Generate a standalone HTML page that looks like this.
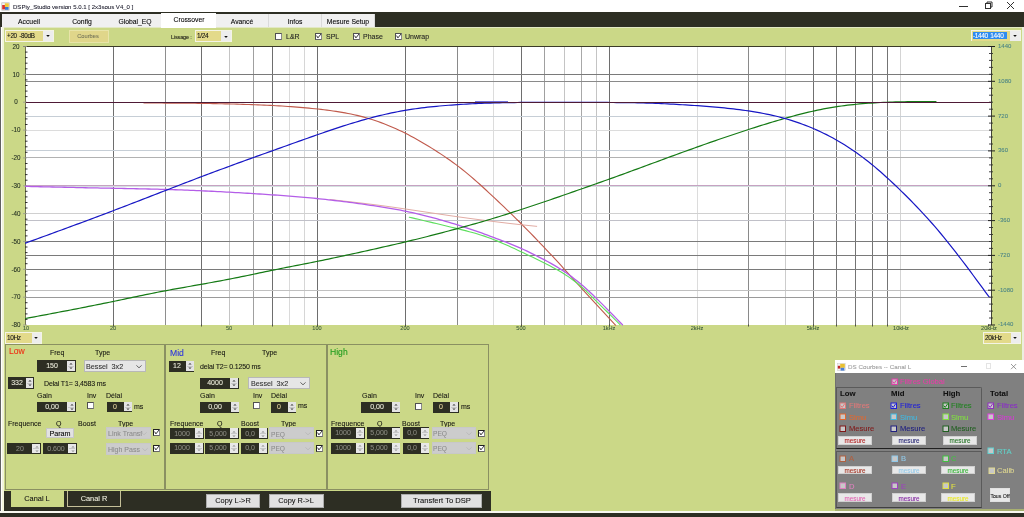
<!DOCTYPE html>
<html><head><meta charset="utf-8"><style>
html,body{margin:0;padding:0;}
body{width:1024px;height:517px;overflow:hidden;position:relative;background:#cbd887;font-family:"Liberation Sans",sans-serif;}
body div{position:absolute;box-sizing:border-box;}
.t{white-space:nowrap;will-change:transform;-webkit-text-stroke:0.08px currentColor;}
svg{position:absolute;left:0;top:0;}
</style></head><body>

<div style="left:0px;top:0px;width:1024px;height:12px;background:#ffffff"></div>
<div style="left:0px;top:11.8px;width:1024px;height:14.9px;background:#2d2e23"></div>
<div style="left:3px;top:26.7px;width:1019px;height:1.3px;background:#e2e8c4"></div>
<div style="left:0px;top:27px;width:1px;height:490px;background:#626262"></div>
<div style="left:1px;top:27px;width:1.4px;height:490px;background:#ffffff"></div>
<div style="left:2.4px;top:27px;width:1.2px;height:490px;background:#f2f4dc"></div>
<div style="left:1022px;top:27px;width:2px;height:333px;background:#eceee0"></div>
<svg width="10" height="10" style="left:1px;top:2px"><rect x="0.8" y="0.8" width="7.4" height="7.4" fill="#f4f4f4" stroke="#b8b8b8" stroke-width="0.7"/><rect x="1.2" y="3" width="3" height="4.4" fill="#d83030"/><rect x="3.8" y="1.3" width="4" height="3.6" fill="#f0c838"/><rect x="4" y="5" width="3.6" height="2.8" fill="#3a7ad0"/></svg>
<div class="t" style="left:12.8px;top:3.80px;font-size:6.05px;line-height:6.96px;color:#202030;">DSPiy_Studio version 5.0.1 [ 2x3sous V4_0 ]</div>
<div style="left:959px;top:5.5px;width:9px;height:1px;background:#303030"></div>
<svg width="20" height="12" style="left:983px;top:0px"><rect x="2.5" y="3.5" width="5" height="5" fill="none" stroke="#303030" stroke-width="1"/><path d="M4 3.5 V2 H9 V7 H7.5" fill="none" stroke="#303030" stroke-width="1"/></svg>
<svg width="14" height="12" style="left:1005px;top:0px"><path d="M2 2 L9 9 M9 2 L2 9" stroke="#303030" stroke-width="1"/></svg>
<div style="left:2px;top:14px;width:53.6px;height:13px;background:#f0f0f0"></div>
<div style="left:54.6px;top:14px;width:1px;height:13px;background:#dadada"></div>
<div class="t" style="left:-71.5px;top:17.58px;width:200px;text-align:center;font-size:6.8px;line-height:7.82px;color:#000000;">Accueil</div>
<div style="left:55px;top:14px;width:53.6px;height:13px;background:#f0f0f0"></div>
<div style="left:107.6px;top:14px;width:1px;height:13px;background:#dadada"></div>
<div class="t" style="left:-18.5px;top:17.58px;width:200px;text-align:center;font-size:6.8px;line-height:7.82px;color:#000000;">Config</div>
<div style="left:108px;top:14px;width:53.6px;height:13px;background:#f0f0f0"></div>
<div style="left:160.6px;top:14px;width:1px;height:13px;background:#dadada"></div>
<div class="t" style="left:34.5px;top:17.58px;width:200px;text-align:center;font-size:6.8px;line-height:7.82px;color:#000000;">Global_EQ</div>
<div style="left:215px;top:14px;width:54.1px;height:13px;background:#f0f0f0"></div>
<div style="left:268.1px;top:14px;width:1px;height:13px;background:#dadada"></div>
<div class="t" style="left:141.75px;top:17.58px;width:200px;text-align:center;font-size:6.8px;line-height:7.82px;color:#000000;">Avancé</div>
<div style="left:268.5px;top:14px;width:53.6px;height:13px;background:#f0f0f0"></div>
<div style="left:321.1px;top:14px;width:1px;height:13px;background:#dadada"></div>
<div class="t" style="left:195.0px;top:17.58px;width:200px;text-align:center;font-size:6.8px;line-height:7.82px;color:#000000;">Infos</div>
<div style="left:321.5px;top:14px;width:53.1px;height:13px;background:#f0f0f0"></div>
<div style="left:373.6px;top:14px;width:1px;height:13px;background:#dadada"></div>
<div class="t" style="left:247.75px;top:17.58px;width:200px;text-align:center;font-size:6.8px;line-height:7.82px;color:#000000;">Mesure Setup</div>
<div style="left:161px;top:13px;width:55px;height:14.5px;background:#ffffff"></div>
<div class="t" style="left:88.5px;top:15.97px;width:200px;text-align:center;font-size:6.8px;line-height:7.82px;color:#000000;">Crossover</div>
<div style="left:5px;top:30px;width:49px;height:12px;background:#f4f4e6"></div>
<div style="left:5.8px;top:30.8px;width:37.4px;height:10.4px;background:#e3da8a"></div>
<div style="left:43.2px;top:30.8px;width:10px;height:10.4px;background:#ededed"></div>
<svg width="8" height="6" style="left:44.20px;top:33.40px"><path d="M2.2 2 H5.8 L4 3.9 Z" fill="#101010"/></svg>
<div class="t" style="left:7.2px;top:32.36px;font-size:6.3px;line-height:7.24px;color:#101010;letter-spacing:-0.3px;word-spacing:1px">+20 -80dB</div>
<div style="left:69px;top:30px;width:40px;height:13px;background:#e0d68a;border:1px solid #e8e4a8"></div>
<div class="t" style="left:-11.700000000000003px;top:32.89px;width:200px;text-align:center;font-size:5.7px;line-height:6.55px;color:#76765a;">Courbes</div>
<div class="t" style="left:170.7px;top:33.75px;font-size:5.6px;line-height:6.44px;color:#202018;letter-spacing:-0.2px">Lissage :</div>
<div style="left:195px;top:30.3px;width:36.599999999999994px;height:11.7px;background:#f4f4e6"></div>
<div style="left:195.8px;top:31.1px;width:25.499999999999993px;height:10.1px;background:#e3da8a"></div>
<div style="left:221.29999999999998px;top:31.1px;width:9.5px;height:10.1px;background:#ededed"></div>
<svg width="8" height="6" style="left:222.05px;top:33.55px"><path d="M2.2 2 H5.8 L4 3.9 Z" fill="#101010"/></svg>
<div class="t" style="left:197.2px;top:32.39px;font-size:6.5px;line-height:7.47px;color:#101010;letter-spacing:-0.35px;word-spacing:1px">1/24</div>
<div style="left:275px;top:33.3px;width:7px;height:7px;background:#ffffff;border:1px solid #505050;border-right-color:#8a8a8a;border-bottom-color:#666"></div>
<div class="t" style="left:285.5px;top:32.86px;font-size:7.0px;line-height:8.05px;color:#222222;">L&amp;R</div>
<div style="left:315.2px;top:33.3px;width:7px;height:7px;background:#ffffff;border:1px solid #505050;border-right-color:#8a8a8a;border-bottom-color:#666"></div>
<svg width="7" height="7" style="left:315.2px;top:33.3px"><path d="M1.6 2.6 L2.9 4.9 L6.0 1.0" fill="none" stroke="#383838" stroke-width="1"/></svg>
<div class="t" style="left:325.5px;top:32.86px;font-size:7.0px;line-height:8.05px;color:#222222;">SPL</div>
<div style="left:353px;top:33.3px;width:7px;height:7px;background:#ffffff;border:1px solid #505050;border-right-color:#8a8a8a;border-bottom-color:#666"></div>
<svg width="7" height="7" style="left:353px;top:33.3px"><path d="M1.6 2.6 L2.9 4.9 L6.0 1.0" fill="none" stroke="#383838" stroke-width="1"/></svg>
<div class="t" style="left:363px;top:32.86px;font-size:7.0px;line-height:8.05px;color:#222222;">Phase</div>
<div style="left:394.6px;top:33.3px;width:7px;height:7px;background:#ffffff;border:1px solid #505050;border-right-color:#8a8a8a;border-bottom-color:#666"></div>
<svg width="7" height="7" style="left:394.6px;top:33.3px"><path d="M1.6 2.6 L2.9 4.9 L6.0 1.0" fill="none" stroke="#383838" stroke-width="1"/></svg>
<div class="t" style="left:404.5px;top:32.86px;font-size:7.0px;line-height:8.05px;color:#222222;">Unwrap</div>
<div style="left:971px;top:30.3px;width:50px;height:11.2px;background:#f4f4e6"></div>
<div style="left:971.8px;top:31.1px;width:38.4px;height:9.6px;background:#e3da8a"></div>
<div style="left:1010.2px;top:31.1px;width:10px;height:9.6px;background:#ededed"></div>
<svg width="8" height="6" style="left:1011.20px;top:33.30px"><path d="M2.2 2 H5.8 L4 3.9 Z" fill="#101010"/></svg>
<div style="left:972.8px;top:31.6px;width:34.5px;height:7.6px;background:#2f8cf0"></div>
<div class="t" style="left:973.2px;top:32.14px;font-size:6.5px;line-height:7.47px;color:#ffffff;letter-spacing:-0.35px;word-spacing:1px">-1440 1440</div>
<svg width="1024" height="517" style="left:0;top:0">
<rect x="26" y="47" width="965" height="278" fill="#ffffff"/>
<line x1="113.5" y1="47" x2="113.5" y2="325" stroke="#6e6e6e" stroke-width="1"/>
<line x1="165.5" y1="47" x2="165.5" y2="325" stroke="#8e8e8e" stroke-width="1"/>
<line x1="201.5" y1="47" x2="201.5" y2="325" stroke="#6e6e6e" stroke-width="1"/>
<line x1="229.5" y1="47" x2="229.5" y2="325" stroke="#c4c4c4" stroke-width="1"/>
<line x1="253.5" y1="47" x2="253.5" y2="325" stroke="#a0a0a0" stroke-width="1"/>
<line x1="272.5" y1="47" x2="272.5" y2="325" stroke="#6e6e6e" stroke-width="1"/>
<line x1="289.5" y1="47" x2="289.5" y2="325" stroke="#dadada" stroke-width="1"/>
<line x1="304.5" y1="47" x2="304.5" y2="325" stroke="#d6d6d6" stroke-width="1"/>
<line x1="317.5" y1="47" x2="317.5" y2="325" stroke="#6e6e6e" stroke-width="1"/>
<line x1="405.5" y1="47" x2="405.5" y2="325" stroke="#6e6e6e" stroke-width="1"/>
<line x1="457.5" y1="47" x2="457.5" y2="325" stroke="#8a8a8a" stroke-width="1"/>
<line x1="493.5" y1="47" x2="493.5" y2="325" stroke="#dcdcdc" stroke-width="1"/>
<line x1="521.5" y1="47" x2="521.5" y2="325" stroke="#6e6e6e" stroke-width="1"/>
<line x1="544.5" y1="47" x2="544.5" y2="325" stroke="#a0a0a0" stroke-width="1"/>
<line x1="564.5" y1="47" x2="564.5" y2="325" stroke="#c4c4c4" stroke-width="1"/>
<line x1="581.5" y1="47" x2="581.5" y2="325" stroke="#a8a8a8" stroke-width="1"/>
<line x1="596.5" y1="47" x2="596.5" y2="325" stroke="#c4c4c4" stroke-width="1"/>
<line x1="609.5" y1="47" x2="609.5" y2="325" stroke="#6e6e6e" stroke-width="1"/>
<line x1="697.5" y1="47" x2="697.5" y2="325" stroke="#dcdcdc" stroke-width="1"/>
<line x1="748.5" y1="47" x2="748.5" y2="325" stroke="#8a8a8a" stroke-width="1"/>
<line x1="785.5" y1="47" x2="785.5" y2="325" stroke="#cccccc" stroke-width="1"/>
<line x1="813.5" y1="47" x2="813.5" y2="325" stroke="#707070" stroke-width="1"/>
<line x1="836.5" y1="47" x2="836.5" y2="325" stroke="#747474" stroke-width="1"/>
<line x1="855.5" y1="47" x2="855.5" y2="325" stroke="#747474" stroke-width="1"/>
<line x1="872.5" y1="47" x2="872.5" y2="325" stroke="#747474" stroke-width="1"/>
<line x1="887.5" y1="47" x2="887.5" y2="325" stroke="#747474" stroke-width="1"/>
<line x1="900.5" y1="47" x2="900.5" y2="325" stroke="#d4d4d4" stroke-width="1"/>
<line x1="26" y1="74.5" x2="991" y2="74.5" stroke="#7a7a7a" stroke-width="1"/>
<line x1="26" y1="81.5" x2="991" y2="81.5" stroke="#8a8a8a" stroke-width="1"/>
<line x1="26" y1="116.5" x2="991" y2="116.5" stroke="#c6ced6" stroke-width="1"/>
<line x1="26" y1="130.5" x2="991" y2="130.5" stroke="#dcdcdc" stroke-width="1"/>
<line x1="26" y1="150.5" x2="991" y2="150.5" stroke="#c6ced6" stroke-width="1"/>
<line x1="26" y1="157.5" x2="991" y2="157.5" stroke="#b2b2b2" stroke-width="1"/>
<line x1="26" y1="213.5" x2="991" y2="213.5" stroke="#d0d0d0" stroke-width="1"/>
<line x1="26" y1="220.5" x2="991" y2="220.5" stroke="#c0c0c8" stroke-width="1"/>
<line x1="26" y1="241.5" x2="991" y2="241.5" stroke="#7a7a7a" stroke-width="1"/>
<line x1="26" y1="255.5" x2="991" y2="255.5" stroke="#7a7a7a" stroke-width="1"/>
<line x1="26" y1="269.5" x2="991" y2="269.5" stroke="#7a7a7a" stroke-width="1"/>
<line x1="26" y1="290.5" x2="991" y2="290.5" stroke="#c0c0c0" stroke-width="1"/>
<line x1="26" y1="297.5" x2="991" y2="297.5" stroke="#9a9a9a" stroke-width="1"/>
<line x1="26" y1="186.5" x2="991" y2="186.5" stroke="#d4e0e0" stroke-width="1"/>
<line x1="26" y1="185.5" x2="991" y2="185.5" stroke="#c6a2c2" stroke-width="1"/>
<line x1="23" y1="46.5" x2="995" y2="46.5" stroke="#3a3a28" stroke-width="1"/>
<line x1="25.5" y1="46" x2="25.5" y2="325" stroke="#5a5a48" stroke-width="0.8"/>
<line x1="991.5" y1="46" x2="991.5" y2="325" stroke="#282828" stroke-width="0.85"/>
<line x1="23" y1="46.5" x2="27" y2="46.5" stroke="#9a9a90" stroke-width="0.8"/>
<line x1="25" y1="52.1" x2="27.5" y2="52.1" stroke="#202020" stroke-width="0.9"/>
<line x1="25" y1="57.6" x2="27.5" y2="57.6" stroke="#202020" stroke-width="0.9"/>
<line x1="25" y1="63.2" x2="27.5" y2="63.2" stroke="#202020" stroke-width="0.9"/>
<line x1="25" y1="68.8" x2="27.5" y2="68.8" stroke="#202020" stroke-width="0.9"/>
<line x1="23" y1="74.3" x2="27" y2="74.3" stroke="#9a9a90" stroke-width="0.8"/>
<line x1="25" y1="79.9" x2="27.5" y2="79.9" stroke="#202020" stroke-width="0.9"/>
<line x1="25" y1="85.5" x2="27.5" y2="85.5" stroke="#202020" stroke-width="0.9"/>
<line x1="25" y1="91.1" x2="27.5" y2="91.1" stroke="#202020" stroke-width="0.9"/>
<line x1="25" y1="96.6" x2="27.5" y2="96.6" stroke="#202020" stroke-width="0.9"/>
<line x1="23" y1="102.2" x2="27" y2="102.2" stroke="#9a9a90" stroke-width="0.8"/>
<line x1="25" y1="107.8" x2="27.5" y2="107.8" stroke="#202020" stroke-width="0.9"/>
<line x1="25" y1="113.3" x2="27.5" y2="113.3" stroke="#202020" stroke-width="0.9"/>
<line x1="25" y1="118.9" x2="27.5" y2="118.9" stroke="#202020" stroke-width="0.9"/>
<line x1="25" y1="124.5" x2="27.5" y2="124.5" stroke="#202020" stroke-width="0.9"/>
<line x1="23" y1="130.1" x2="27" y2="130.1" stroke="#9a9a90" stroke-width="0.8"/>
<line x1="25" y1="135.6" x2="27.5" y2="135.6" stroke="#202020" stroke-width="0.9"/>
<line x1="25" y1="141.2" x2="27.5" y2="141.2" stroke="#202020" stroke-width="0.9"/>
<line x1="25" y1="146.8" x2="27.5" y2="146.8" stroke="#202020" stroke-width="0.9"/>
<line x1="25" y1="152.3" x2="27.5" y2="152.3" stroke="#202020" stroke-width="0.9"/>
<line x1="23" y1="157.9" x2="27" y2="157.9" stroke="#9a9a90" stroke-width="0.8"/>
<line x1="25" y1="163.5" x2="27.5" y2="163.5" stroke="#202020" stroke-width="0.9"/>
<line x1="25" y1="169.0" x2="27.5" y2="169.0" stroke="#202020" stroke-width="0.9"/>
<line x1="25" y1="174.6" x2="27.5" y2="174.6" stroke="#202020" stroke-width="0.9"/>
<line x1="25" y1="180.2" x2="27.5" y2="180.2" stroke="#202020" stroke-width="0.9"/>
<line x1="23" y1="185.8" x2="27" y2="185.8" stroke="#9a9a90" stroke-width="0.8"/>
<line x1="25" y1="191.3" x2="27.5" y2="191.3" stroke="#202020" stroke-width="0.9"/>
<line x1="25" y1="196.9" x2="27.5" y2="196.9" stroke="#202020" stroke-width="0.9"/>
<line x1="25" y1="202.5" x2="27.5" y2="202.5" stroke="#202020" stroke-width="0.9"/>
<line x1="25" y1="208.0" x2="27.5" y2="208.0" stroke="#202020" stroke-width="0.9"/>
<line x1="23" y1="213.6" x2="27" y2="213.6" stroke="#9a9a90" stroke-width="0.8"/>
<line x1="25" y1="219.2" x2="27.5" y2="219.2" stroke="#202020" stroke-width="0.9"/>
<line x1="25" y1="224.7" x2="27.5" y2="224.7" stroke="#202020" stroke-width="0.9"/>
<line x1="25" y1="230.3" x2="27.5" y2="230.3" stroke="#202020" stroke-width="0.9"/>
<line x1="25" y1="235.9" x2="27.5" y2="235.9" stroke="#202020" stroke-width="0.9"/>
<line x1="23" y1="241.4" x2="27" y2="241.4" stroke="#9a9a90" stroke-width="0.8"/>
<line x1="25" y1="247.0" x2="27.5" y2="247.0" stroke="#202020" stroke-width="0.9"/>
<line x1="25" y1="252.6" x2="27.5" y2="252.6" stroke="#202020" stroke-width="0.9"/>
<line x1="25" y1="258.2" x2="27.5" y2="258.2" stroke="#202020" stroke-width="0.9"/>
<line x1="25" y1="263.7" x2="27.5" y2="263.7" stroke="#202020" stroke-width="0.9"/>
<line x1="23" y1="269.3" x2="27" y2="269.3" stroke="#9a9a90" stroke-width="0.8"/>
<line x1="25" y1="274.9" x2="27.5" y2="274.9" stroke="#202020" stroke-width="0.9"/>
<line x1="25" y1="280.4" x2="27.5" y2="280.4" stroke="#202020" stroke-width="0.9"/>
<line x1="25" y1="286.0" x2="27.5" y2="286.0" stroke="#202020" stroke-width="0.9"/>
<line x1="25" y1="291.6" x2="27.5" y2="291.6" stroke="#202020" stroke-width="0.9"/>
<line x1="23" y1="297.2" x2="27" y2="297.2" stroke="#9a9a90" stroke-width="0.8"/>
<line x1="25" y1="302.7" x2="27.5" y2="302.7" stroke="#202020" stroke-width="0.9"/>
<line x1="25" y1="308.3" x2="27.5" y2="308.3" stroke="#202020" stroke-width="0.9"/>
<line x1="25" y1="313.9" x2="27.5" y2="313.9" stroke="#202020" stroke-width="0.9"/>
<line x1="25" y1="319.4" x2="27.5" y2="319.4" stroke="#202020" stroke-width="0.9"/>
<line x1="23" y1="325.0" x2="27" y2="325.0" stroke="#9a9a90" stroke-width="0.8"/>
<line x1="988" y1="46.5" x2="995" y2="46.5" stroke="#202020" stroke-width="1"/>
<line x1="989" y1="53.5" x2="993" y2="53.5" stroke="#303030" stroke-width="0.9"/>
<line x1="989" y1="60.4" x2="993" y2="60.4" stroke="#303030" stroke-width="0.9"/>
<line x1="989" y1="67.4" x2="993" y2="67.4" stroke="#303030" stroke-width="0.9"/>
<line x1="989" y1="74.3" x2="993" y2="74.3" stroke="#303030" stroke-width="0.9"/>
<line x1="988" y1="81.3" x2="995" y2="81.3" stroke="#202020" stroke-width="1"/>
<line x1="989" y1="88.3" x2="993" y2="88.3" stroke="#303030" stroke-width="0.9"/>
<line x1="989" y1="95.2" x2="993" y2="95.2" stroke="#303030" stroke-width="0.9"/>
<line x1="989" y1="102.2" x2="993" y2="102.2" stroke="#303030" stroke-width="0.9"/>
<line x1="989" y1="109.2" x2="993" y2="109.2" stroke="#303030" stroke-width="0.9"/>
<line x1="988" y1="116.1" x2="995" y2="116.1" stroke="#202020" stroke-width="1"/>
<line x1="989" y1="123.1" x2="993" y2="123.1" stroke="#303030" stroke-width="0.9"/>
<line x1="989" y1="130.1" x2="993" y2="130.1" stroke="#303030" stroke-width="0.9"/>
<line x1="989" y1="137.0" x2="993" y2="137.0" stroke="#303030" stroke-width="0.9"/>
<line x1="989" y1="144.0" x2="993" y2="144.0" stroke="#303030" stroke-width="0.9"/>
<line x1="988" y1="150.9" x2="995" y2="150.9" stroke="#202020" stroke-width="1"/>
<line x1="989" y1="157.9" x2="993" y2="157.9" stroke="#303030" stroke-width="0.9"/>
<line x1="989" y1="164.9" x2="993" y2="164.9" stroke="#303030" stroke-width="0.9"/>
<line x1="989" y1="171.8" x2="993" y2="171.8" stroke="#303030" stroke-width="0.9"/>
<line x1="989" y1="178.8" x2="993" y2="178.8" stroke="#303030" stroke-width="0.9"/>
<line x1="988" y1="185.8" x2="995" y2="185.8" stroke="#202020" stroke-width="1"/>
<line x1="989" y1="192.7" x2="993" y2="192.7" stroke="#303030" stroke-width="0.9"/>
<line x1="989" y1="199.7" x2="993" y2="199.7" stroke="#303030" stroke-width="0.9"/>
<line x1="989" y1="206.6" x2="993" y2="206.6" stroke="#303030" stroke-width="0.9"/>
<line x1="989" y1="213.6" x2="993" y2="213.6" stroke="#303030" stroke-width="0.9"/>
<line x1="988" y1="220.6" x2="995" y2="220.6" stroke="#202020" stroke-width="1"/>
<line x1="989" y1="227.5" x2="993" y2="227.5" stroke="#303030" stroke-width="0.9"/>
<line x1="989" y1="234.5" x2="993" y2="234.5" stroke="#303030" stroke-width="0.9"/>
<line x1="989" y1="241.5" x2="993" y2="241.5" stroke="#303030" stroke-width="0.9"/>
<line x1="989" y1="248.4" x2="993" y2="248.4" stroke="#303030" stroke-width="0.9"/>
<line x1="988" y1="255.4" x2="995" y2="255.4" stroke="#202020" stroke-width="1"/>
<line x1="989" y1="262.3" x2="993" y2="262.3" stroke="#303030" stroke-width="0.9"/>
<line x1="989" y1="269.3" x2="993" y2="269.3" stroke="#303030" stroke-width="0.9"/>
<line x1="989" y1="276.3" x2="993" y2="276.3" stroke="#303030" stroke-width="0.9"/>
<line x1="989" y1="283.2" x2="993" y2="283.2" stroke="#303030" stroke-width="0.9"/>
<line x1="988" y1="290.2" x2="995" y2="290.2" stroke="#202020" stroke-width="1"/>
<line x1="989" y1="297.1" x2="993" y2="297.1" stroke="#303030" stroke-width="0.9"/>
<line x1="989" y1="304.1" x2="993" y2="304.1" stroke="#303030" stroke-width="0.9"/>
<line x1="989" y1="311.1" x2="993" y2="311.1" stroke="#303030" stroke-width="0.9"/>
<line x1="989" y1="318.0" x2="993" y2="318.0" stroke="#303030" stroke-width="0.9"/>
<line x1="988" y1="325.0" x2="995" y2="325.0" stroke="#202020" stroke-width="1"/>
<line x1="113.5" y1="324.5" x2="113.5" y2="326.5" stroke="#404040" stroke-width="0.9"/>
<line x1="317.5" y1="324.5" x2="317.5" y2="326.5" stroke="#404040" stroke-width="0.9"/>
<line x1="405.5" y1="324.5" x2="405.5" y2="326.5" stroke="#404040" stroke-width="0.9"/>
<line x1="521.5" y1="324.5" x2="521.5" y2="326.5" stroke="#404040" stroke-width="0.9"/>
<line x1="609.5" y1="324.5" x2="609.5" y2="326.5" stroke="#404040" stroke-width="0.9"/>
<line x1="813.5" y1="324.5" x2="813.5" y2="326.5" stroke="#404040" stroke-width="0.9"/>
<line x1="988.5" y1="324.5" x2="988.5" y2="326.5" stroke="#404040" stroke-width="0.9"/>
<line x1="201.5" y1="324.5" x2="201.5" y2="326.5" stroke="#404040" stroke-width="0.9"/>
<line x1="272.5" y1="324.5" x2="272.5" y2="326.5" stroke="#404040" stroke-width="0.9"/>
<line x1="748.5" y1="324.5" x2="748.5" y2="326.5" stroke="#404040" stroke-width="0.9"/>
<line x1="836.5" y1="324.5" x2="836.5" y2="326.5" stroke="#404040" stroke-width="0.9"/>
<line x1="855.5" y1="324.5" x2="855.5" y2="326.5" stroke="#404040" stroke-width="0.9"/>
<line x1="872.5" y1="324.5" x2="872.5" y2="326.5" stroke="#404040" stroke-width="0.9"/>
<line x1="887.5" y1="324.5" x2="887.5" y2="326.5" stroke="#404040" stroke-width="0.9"/>
<path d="M144.0 102.98 L147.0 102.99 L150.0 103.01 L153.0 103.02 L156.0 103.03 L159.0 103.05 L162.0 103.06 L165.0 103.08 L168.0 103.09 L171.0 103.11 L174.0 103.13 L177.0 103.15 L180.0 103.17 L183.0 103.20 L186.0 103.23 L189.0 103.25 L192.0 103.29 L195.0 103.32 L198.0 103.36 L201.0 103.40 L204.0 103.44 L207.0 103.49 L210.0 103.54 L213.0 103.59 L216.0 103.65 L219.0 103.71 L222.0 103.77 L225.0 103.84 L228.0 103.91 L231.0 103.98 L234.0 104.06 L237.0 104.15 L240.0 104.24 L243.0 104.33 L246.0 104.43 L249.0 104.53 L252.0 104.64 L255.0 104.75 L258.0 104.87 L261.0 104.99 L264.0 105.12 L267.0 105.26 L270.0 105.41 L273.0 105.56 L276.0 105.72 L279.0 105.89 L282.0 106.07 L285.0 106.25 L288.0 106.45 L291.0 106.66 L294.0 106.88 L297.0 107.11 L300.0 107.35 L303.0 107.60 L306.0 107.87 L309.0 108.15 L312.0 108.44 L315.0 108.74 L318.0 109.06 L321.0 109.40 L324.0 109.75 L327.0 110.12 L330.0 110.51 L333.0 110.93 L336.0 111.37 L339.0 111.84 L342.0 112.34 L345.0 112.87 L348.0 113.44 L351.0 114.05 L354.0 114.70 L357.0 115.39 L360.0 116.12 L363.0 116.90 L366.0 117.72 L369.0 118.60 L372.0 119.53 L375.0 120.51 L378.0 121.53 L381.0 122.61 L384.0 123.74 L387.0 124.92 L390.0 126.15 L393.0 127.43 L396.0 128.77 L399.0 130.15 L402.0 131.58 L405.0 133.07 L408.0 134.60 L411.0 136.17 L414.0 137.80 L417.0 139.46 L420.0 141.16 L423.0 142.91 L426.0 144.69 L429.0 146.50 L432.0 148.36 L435.0 150.25 L438.0 152.18 L441.0 154.14 L444.0 156.14 L447.0 158.19 L450.0 160.29 L453.0 162.43 L456.0 164.64 L459.0 166.91 L462.0 169.25 L465.0 171.65 L468.0 174.11 L471.0 176.63 L474.0 179.21 L477.0 181.84 L480.0 184.52 L483.0 187.24 L486.0 190.00 L489.0 192.79 L492.0 195.60 L495.0 198.42 L498.0 201.25 L501.0 204.10 L504.0 206.95 L507.0 209.82 L510.0 212.70 L513.0 215.60 L516.0 218.54 L519.0 221.50 L522.0 224.50 L525.0 227.52 L528.0 230.58 L531.0 233.65 L534.0 236.75 L537.0 239.87 L540.0 243.01 L543.0 246.17 L546.0 249.34 L549.0 252.53 L552.0 255.73 L555.0 258.96 L558.0 262.21 L561.0 265.48 L564.0 268.76 L567.0 272.07 L570.0 275.39 L573.0 278.73 L576.0 282.06 L579.0 285.40 L582.0 288.74 L585.0 292.07 L588.0 295.38 L591.0 298.68 L594.0 301.97 L597.0 305.23 L600.0 308.48 L603.0 311.71 L606.0 314.93 L609.0 318.13 L612.0 321.33 L615.0 324.53 L615.6 325.17" fill="none" stroke="#c05a4c" stroke-width="1.1" opacity="1" stroke-linejoin="round" stroke-linecap="round"/>
<path d="M330.0 199.55 L333.0 199.88 L336.0 200.21 L339.0 200.54 L342.0 200.87 L345.0 201.21 L348.0 201.54 L351.0 201.88 L354.0 202.23 L357.0 202.57 L360.0 202.93 L363.0 203.28 L366.0 203.64 L369.0 204.01 L372.0 204.39 L375.0 204.77 L378.0 205.15 L381.0 205.55 L384.0 205.95 L387.0 206.36 L390.0 206.78 L393.0 207.20 L396.0 207.63 L399.0 208.06 L402.0 208.50 L405.0 208.94 L408.0 209.39 L411.0 209.83 L414.0 210.28 L417.0 210.73 L420.0 211.19 L423.0 211.64 L426.0 212.09 L429.0 212.54 L432.0 213.00 L435.0 213.45 L438.0 213.89 L441.0 214.34 L444.0 214.78 L447.0 215.22 L450.0 215.66 L453.0 216.09 L456.0 216.52 L459.0 216.94 L462.0 217.36 L465.0 217.78 L468.0 218.19 L471.0 218.59 L474.0 218.99 L477.0 219.39 L480.0 219.78 L483.0 220.17 L486.0 220.55 L489.0 220.93 L492.0 221.31 L495.0 221.69 L498.0 222.06 L501.0 222.42 L504.0 222.78 L507.0 223.14 L510.0 223.49 L513.0 223.83 L516.0 224.17 L519.0 224.50 L522.0 224.83 L525.0 225.14 L528.0 225.46 L531.0 225.76 L534.0 226.07 L536.7 226.35" fill="none" stroke="#e2aca4" stroke-width="1.0" opacity="1" stroke-linejoin="round" stroke-linecap="round"/>
<path d="M409.3 217.20 L412.3 217.90 L415.3 218.61 L418.3 219.32 L421.3 220.02 L424.3 220.73 L427.3 221.44 L430.3 222.15 L433.3 222.86 L436.3 223.57 L439.3 224.29 L442.3 225.01 L445.3 225.73 L448.3 226.45 L451.3 227.17 L454.3 227.90 L457.3 228.63 L460.3 229.37 L463.3 230.12 L466.3 230.89 L469.3 231.68 L472.3 232.49 L475.3 233.34 L478.3 234.23 L481.3 235.16 L484.3 236.13 L487.3 237.17 L490.3 238.26 L493.3 239.41 L496.3 240.62 L499.3 241.87 L502.3 243.17 L505.3 244.50 L508.3 245.85 L511.3 247.22 L514.3 248.60 L517.3 250.00 L520.3 251.40 L523.3 252.81 L526.3 254.23 L529.3 255.67 L532.3 257.11 L535.3 258.57 L538.3 260.04 L541.3 261.52 L544.3 263.03 L547.3 264.55 L550.3 266.10 L553.3 267.69 L556.3 269.33 L559.3 271.04 L562.3 272.82 L565.3 274.69 L568.3 276.66 L571.3 278.74 L574.3 280.95 L577.3 283.29 L580.3 285.78 L583.3 288.42 L586.3 291.22 L589.3 294.12 L592.3 297.09 L595.3 300.10 L598.3 303.10 L601.3 306.08 L604.3 309.05 L607.3 312.01 L610.3 314.98 L613.3 317.94 L616.3 320.92 L619.3 323.89 L620.2 324.78" fill="none" stroke="#5ede5e" stroke-width="1.1" opacity="1" stroke-linejoin="round" stroke-linecap="round"/>
<path d="M25.5 186.40 L28.5 186.47 L31.5 186.54 L34.5 186.60 L37.5 186.67 L40.5 186.74 L43.5 186.81 L46.5 186.87 L49.5 186.94 L52.5 187.01 L55.5 187.08 L58.5 187.14 L61.5 187.21 L64.5 187.27 L67.5 187.34 L70.5 187.41 L73.5 187.47 L76.5 187.53 L79.5 187.60 L82.5 187.66 L85.5 187.73 L88.5 187.79 L91.5 187.85 L94.5 187.91 L97.5 187.97 L100.5 188.03 L103.5 188.09 L106.5 188.15 L109.5 188.21 L112.5 188.27 L115.5 188.33 L118.5 188.38 L121.5 188.44 L124.5 188.50 L127.5 188.55 L130.5 188.61 L133.5 188.67 L136.5 188.73 L139.5 188.79 L142.5 188.85 L145.5 188.92 L148.5 188.98 L151.5 189.06 L154.5 189.13 L157.5 189.21 L160.5 189.29 L163.5 189.37 L166.5 189.46 L169.5 189.55 L172.5 189.65 L175.5 189.75 L178.5 189.86 L181.5 189.97 L184.5 190.08 L187.5 190.20 L190.5 190.32 L193.5 190.44 L196.5 190.57 L199.5 190.70 L202.5 190.84 L205.5 190.98 L208.5 191.12 L211.5 191.27 L214.5 191.41 L217.5 191.56 L220.5 191.72 L223.5 191.88 L226.5 192.04 L229.5 192.20 L232.5 192.37 L235.5 192.53 L238.5 192.71 L241.5 192.88 L244.5 193.06 L247.5 193.24 L250.5 193.42 L253.5 193.60 L256.5 193.79 L259.5 193.98 L262.5 194.17 L265.5 194.37 L268.5 194.57 L271.5 194.78 L274.5 194.99 L277.5 195.20 L280.5 195.42 L283.5 195.64 L286.5 195.87 L289.5 196.11 L292.5 196.35 L295.5 196.60 L298.5 196.85 L301.5 197.11 L304.5 197.38 L307.5 197.65 L310.5 197.93 L313.5 198.22 L316.5 198.52 L319.5 198.83 L322.5 199.14 L325.5 199.46 L328.5 199.79 L331.5 200.13 L334.5 200.48 L337.5 200.84 L340.5 201.20 L343.5 201.57 L346.5 201.95 L349.5 202.34 L352.5 202.73 L355.5 203.14 L358.5 203.55 L361.5 203.97 L364.5 204.39 L367.5 204.83 L370.5 205.27 L373.5 205.72 L376.5 206.18 L379.5 206.64 L382.5 207.12 L385.5 207.60 L388.5 208.09 L391.5 208.60 L394.5 209.12 L397.5 209.66 L400.5 210.22 L403.5 210.80 L406.5 211.41 L409.5 212.04 L412.5 212.70 L415.5 213.37 L418.5 214.07 L421.5 214.80 L424.5 215.54 L427.5 216.30 L430.5 217.09 L433.5 217.89 L436.5 218.71 L439.5 219.55 L442.5 220.40 L445.5 221.27 L448.5 222.16 L451.5 223.06 L454.5 223.97 L457.5 224.90 L460.5 225.84 L463.5 226.79 L466.5 227.77 L469.5 228.76 L472.5 229.78 L475.5 230.82 L478.5 231.89 L481.5 232.98 L484.5 234.08 L487.5 235.18 L490.5 236.29 L493.5 237.40 L496.5 238.52 L499.5 239.64 L502.5 240.78 L505.5 241.94 L508.5 243.12 L511.5 244.33 L514.5 245.57 L517.5 246.85 L520.5 248.17 L523.5 249.52 L526.5 250.91 L529.5 252.34 L532.5 253.80 L535.5 255.29 L538.5 256.82 L541.5 258.37 L544.5 259.95 L547.5 261.55 L550.5 263.19 L553.5 264.88 L556.5 266.62 L559.5 268.44 L562.5 270.34 L565.5 272.33 L568.5 274.42 L571.5 276.61 L574.5 278.90 L577.5 281.29 L580.5 283.77 L583.5 286.35 L586.5 289.02 L589.5 291.77 L592.5 294.59 L595.5 297.47 L598.5 300.41 L601.5 303.39 L604.5 306.40 L607.5 309.44 L610.5 312.49 L613.5 315.55 L616.5 318.61 L619.5 321.68 L622.5 324.75" fill="none" stroke="#b45ee8" stroke-width="1.3" opacity="1" stroke-linejoin="round" stroke-linecap="round"/>
<path d="M25.5 318.51 L28.5 317.95 L31.5 317.39 L34.5 316.82 L37.5 316.26 L40.5 315.69 L43.5 315.12 L46.5 314.56 L49.5 313.99 L52.5 313.42 L55.5 312.85 L58.5 312.28 L61.5 311.70 L64.5 311.13 L67.5 310.55 L70.5 309.97 L73.5 309.39 L76.5 308.81 L79.5 308.22 L82.5 307.64 L85.5 307.05 L88.5 306.45 L91.5 305.86 L94.5 305.26 L97.5 304.66 L100.5 304.05 L103.5 303.45 L106.5 302.84 L109.5 302.22 L112.5 301.60 L115.5 300.98 L118.5 300.35 L121.5 299.72 L124.5 299.09 L127.5 298.46 L130.5 297.83 L133.5 297.20 L136.5 296.57 L139.5 295.94 L142.5 295.32 L145.5 294.70 L148.5 294.09 L151.5 293.48 L154.5 292.87 L157.5 292.28 L160.5 291.69 L163.5 291.11 L166.5 290.54 L169.5 289.98 L172.5 289.43 L175.5 288.89 L178.5 288.35 L181.5 287.82 L184.5 287.29 L187.5 286.76 L190.5 286.24 L193.5 285.71 L196.5 285.18 L199.5 284.65 L202.5 284.12 L205.5 283.58 L208.5 283.03 L211.5 282.48 L214.5 281.93 L217.5 281.37 L220.5 280.81 L223.5 280.24 L226.5 279.66 L229.5 279.08 L232.5 278.50 L235.5 277.90 L238.5 277.31 L241.5 276.70 L244.5 276.09 L247.5 275.47 L250.5 274.85 L253.5 274.22 L256.5 273.59 L259.5 272.96 L262.5 272.32 L265.5 271.69 L268.5 271.06 L271.5 270.44 L274.5 269.83 L277.5 269.22 L280.5 268.62 L283.5 268.03 L286.5 267.44 L289.5 266.86 L292.5 266.27 L295.5 265.69 L298.5 265.11 L301.5 264.52 L304.5 263.93 L307.5 263.34 L310.5 262.74 L313.5 262.14 L316.5 261.53 L319.5 260.92 L322.5 260.30 L325.5 259.68 L328.5 259.05 L331.5 258.42 L334.5 257.78 L337.5 257.14 L340.5 256.49 L343.5 255.84 L346.5 255.19 L349.5 254.53 L352.5 253.88 L355.5 253.22 L358.5 252.55 L361.5 251.89 L364.5 251.22 L367.5 250.56 L370.5 249.89 L373.5 249.22 L376.5 248.55 L379.5 247.88 L382.5 247.20 L385.5 246.52 L388.5 245.84 L391.5 245.16 L394.5 244.47 L397.5 243.77 L400.5 243.07 L403.5 242.36 L406.5 241.65 L409.5 240.92 L412.5 240.19 L415.5 239.46 L418.5 238.72 L421.5 237.97 L424.5 237.21 L427.5 236.46 L430.5 235.69 L433.5 234.92 L436.5 234.15 L439.5 233.37 L442.5 232.58 L445.5 231.79 L448.5 231.00 L451.5 230.20 L454.5 229.39 L457.5 228.58 L460.5 227.77 L463.5 226.95 L466.5 226.12 L469.5 225.28 L472.5 224.44 L475.5 223.59 L478.5 222.74 L481.5 221.87 L484.5 220.99 L487.5 220.11 L490.5 219.21 L493.5 218.30 L496.5 217.38 L499.5 216.45 L502.5 215.51 L505.5 214.57 L508.5 213.61 L511.5 212.65 L514.5 211.69 L517.5 210.72 L520.5 209.74 L523.5 208.76 L526.5 207.77 L529.5 206.78 L532.5 205.79 L535.5 204.79 L538.5 203.78 L541.5 202.77 L544.5 201.75 L547.5 200.73 L550.5 199.70 L553.5 198.67 L556.5 197.64 L559.5 196.60 L562.5 195.55 L565.5 194.51 L568.5 193.46 L571.5 192.41 L574.5 191.36 L577.5 190.30 L580.5 189.25 L583.5 188.20 L586.5 187.14 L589.5 186.09 L592.5 185.04 L595.5 183.98 L598.5 182.92 L601.5 181.86 L604.5 180.80 L607.5 179.73 L610.5 178.66 L613.5 177.58 L616.5 176.50 L619.5 175.41 L622.5 174.32 L625.5 173.22 L628.5 172.13 L631.5 171.03 L634.5 169.93 L637.5 168.82 L640.5 167.72 L643.5 166.61 L646.5 165.51 L649.5 164.40 L652.5 163.30 L655.5 162.19 L658.5 161.09 L661.5 159.98 L664.5 158.88 L667.5 157.78 L670.5 156.68 L673.5 155.59 L676.5 154.49 L679.5 153.40 L682.5 152.31 L685.5 151.23 L688.5 150.15 L691.5 149.07 L694.5 147.99 L697.5 146.92 L700.5 145.86 L703.5 144.79 L706.5 143.74 L709.5 142.68 L712.5 141.63 L715.5 140.59 L718.5 139.55 L721.5 138.52 L724.5 137.50 L727.5 136.47 L730.5 135.46 L733.5 134.45 L736.5 133.45 L739.5 132.45 L742.5 131.46 L745.5 130.48 L748.5 129.51 L751.5 128.54 L754.5 127.58 L757.5 126.63 L760.5 125.69 L763.5 124.75 L766.5 123.83 L769.5 122.91 L772.5 122.01 L775.5 121.12 L778.5 120.23 L781.5 119.36 L784.5 118.50 L787.5 117.65 L790.5 116.82 L793.5 116.00 L796.5 115.20 L799.5 114.41 L802.5 113.65 L805.5 112.90 L808.5 112.18 L811.5 111.48 L814.5 110.81 L817.5 110.17 L820.5 109.55 L823.5 108.96 L826.5 108.40 L829.5 107.86 L832.5 107.35 L835.5 106.87 L838.5 106.42 L841.5 105.99 L844.5 105.60 L847.5 105.22 L850.5 104.87 L853.5 104.55 L856.5 104.25 L859.5 103.97 L862.5 103.71 L865.5 103.46 L868.5 103.24 L871.5 103.04 L874.5 102.85 L877.5 102.67 L880.5 102.51 L883.5 102.36 L886.5 102.23 L889.5 102.12 L892.5 102.02 L895.5 101.93 L898.5 101.85 L901.5 101.79 L904.5 101.74 L907.5 101.69 L910.5 101.66 L913.5 101.63 L916.5 101.61 L919.5 101.60 L922.5 101.59 L925.5 101.59 L928.5 101.59 L931.5 101.59 L934.5 101.59 L936.0 101.60" fill="none" stroke="#157a15" stroke-width="1.2" opacity="1" stroke-linejoin="round" stroke-linecap="round"/>
<path d="M25.5 243.11 L28.5 242.02 L31.5 240.92 L34.5 239.83 L37.5 238.74 L40.5 237.64 L43.5 236.55 L46.5 235.45 L49.5 234.35 L52.5 233.25 L55.5 232.16 L58.5 231.06 L61.5 229.96 L64.5 228.85 L67.5 227.75 L70.5 226.64 L73.5 225.54 L76.5 224.43 L79.5 223.32 L82.5 222.20 L85.5 221.09 L88.5 219.97 L91.5 218.85 L94.5 217.73 L97.5 216.61 L100.5 215.48 L103.5 214.35 L106.5 213.22 L109.5 212.08 L112.5 210.94 L115.5 209.80 L118.5 208.65 L121.5 207.51 L124.5 206.36 L127.5 205.20 L130.5 204.05 L133.5 202.89 L136.5 201.73 L139.5 200.57 L142.5 199.41 L145.5 198.25 L148.5 197.08 L151.5 195.92 L154.5 194.76 L157.5 193.59 L160.5 192.43 L163.5 191.27 L166.5 190.10 L169.5 188.94 L172.5 187.78 L175.5 186.62 L178.5 185.46 L181.5 184.31 L184.5 183.15 L187.5 182.00 L190.5 180.85 L193.5 179.71 L196.5 178.56 L199.5 177.43 L202.5 176.29 L205.5 175.16 L208.5 174.03 L211.5 172.90 L214.5 171.78 L217.5 170.66 L220.5 169.55 L223.5 168.44 L226.5 167.33 L229.5 166.22 L232.5 165.12 L235.5 164.02 L238.5 162.93 L241.5 161.84 L244.5 160.75 L247.5 159.67 L250.5 158.59 L253.5 157.51 L256.5 156.43 L259.5 155.36 L262.5 154.29 L265.5 153.21 L268.5 152.14 L271.5 151.07 L274.5 150.00 L277.5 148.92 L280.5 147.85 L283.5 146.77 L286.5 145.70 L289.5 144.62 L292.5 143.55 L295.5 142.47 L298.5 141.40 L301.5 140.34 L304.5 139.27 L307.5 138.21 L310.5 137.15 L313.5 136.10 L316.5 135.05 L319.5 134.00 L322.5 132.97 L325.5 131.93 L328.5 130.91 L331.5 129.89 L334.5 128.89 L337.5 127.90 L340.5 126.91 L343.5 125.94 L346.5 124.99 L349.5 124.05 L352.5 123.12 L355.5 122.21 L358.5 121.32 L361.5 120.45 L364.5 119.60 L367.5 118.77 L370.5 117.97 L373.5 117.18 L376.5 116.42 L379.5 115.68 L382.5 114.96 L385.5 114.26 L388.5 113.60 L391.5 112.95 L394.5 112.33 L397.5 111.74 L400.5 111.17 L403.5 110.63 L406.5 110.11 L409.5 109.63 L412.5 109.17 L415.5 108.73 L418.5 108.32 L421.5 107.92 L424.5 107.56 L427.5 107.21 L430.5 106.88 L433.5 106.57 L436.5 106.28 L439.5 106.00 L442.5 105.74 L445.5 105.49 L448.5 105.26 L451.5 105.04 L454.5 104.83 L457.5 104.63 L460.5 104.44 L463.5 104.25 L466.5 104.08 L469.5 103.92 L472.5 103.76 L475.5 103.62 L478.5 103.49 L481.5 103.36 L484.5 103.24 L487.5 103.14 L490.5 103.04 L493.5 102.95 L496.5 102.87 L499.5 102.80 L502.5 102.73 L505.5 102.67 L508.5 102.62 L511.5 102.58 L514.5 102.54 L517.5 102.50 L520.5 102.47 L523.5 102.45 L526.5 102.43 L529.5 102.41 L532.5 102.39 L535.5 102.38 L538.5 102.37 L541.5 102.37 L544.5 102.36 L547.5 102.36 L550.5 102.36 L553.5 102.36 L556.5 102.36 L559.5 102.36 L562.5 102.36 L565.5 102.37 L568.5 102.37 L571.5 102.37 L574.5 102.38 L577.5 102.38 L580.5 102.39 L583.5 102.39 L586.5 102.40 L589.5 102.41 L592.5 102.42 L595.5 102.42 L598.5 102.43 L601.5 102.44 L604.5 102.46 L607.5 102.47 L610.5 102.48 L613.5 102.50 L616.5 102.53 L619.5 102.55 L622.5 102.58 L625.5 102.62 L628.5 102.66 L631.5 102.71 L634.5 102.77 L637.5 102.83 L640.5 102.90 L643.5 102.98 L646.5 103.07 L649.5 103.17 L652.5 103.27 L655.5 103.38 L658.5 103.51 L661.5 103.63 L664.5 103.77 L667.5 103.91 L670.5 104.06 L673.5 104.22 L676.5 104.38 L679.5 104.55 L682.5 104.73 L685.5 104.91 L688.5 105.10 L691.5 105.29 L694.5 105.49 L697.5 105.69 L700.5 105.91 L703.5 106.13 L706.5 106.36 L709.5 106.60 L712.5 106.85 L715.5 107.11 L718.5 107.38 L721.5 107.67 L724.5 107.97 L727.5 108.28 L730.5 108.61 L733.5 108.96 L736.5 109.32 L739.5 109.70 L742.5 110.10 L745.5 110.51 L748.5 110.95 L751.5 111.41 L754.5 111.89 L757.5 112.39 L760.5 112.92 L763.5 113.48 L766.5 114.07 L769.5 114.69 L772.5 115.35 L775.5 116.04 L778.5 116.77 L781.5 117.55 L784.5 118.36 L787.5 119.22 L790.5 120.12 L793.5 121.08 L796.5 122.07 L799.5 123.11 L802.5 124.20 L805.5 125.34 L808.5 126.52 L811.5 127.75 L814.5 129.03 L817.5 130.36 L820.5 131.74 L823.5 133.17 L826.5 134.66 L829.5 136.19 L832.5 137.79 L835.5 139.45 L838.5 141.16 L841.5 142.94 L844.5 144.77 L847.5 146.67 L850.5 148.63 L853.5 150.66 L856.5 152.75 L859.5 154.90 L862.5 157.12 L865.5 159.40 L868.5 161.75 L871.5 164.17 L874.5 166.65 L877.5 169.20 L880.5 171.81 L883.5 174.47 L886.5 177.18 L889.5 179.93 L892.5 182.72 L895.5 185.56 L898.5 188.43 L901.5 191.34 L904.5 194.29 L907.5 197.27 L910.5 200.29 L913.5 203.35 L916.5 206.46 L919.5 209.61 L922.5 212.81 L925.5 216.07 L928.5 219.39 L931.5 222.76 L934.5 226.20 L937.5 229.70 L940.5 233.26 L943.5 236.89 L946.5 240.57 L949.5 244.31 L952.5 248.11 L955.5 251.95 L958.5 255.84 L961.5 259.76 L964.5 263.71 L967.5 267.70 L970.5 271.71 L973.5 275.74 L976.5 279.80 L979.5 283.87 L982.5 287.96 L985.5 292.07 L988.5 296.17 L988.9 296.72" fill="none" stroke="#1616c4" stroke-width="1.2" opacity="1" stroke-linejoin="round" stroke-linecap="round"/>
<line x1="26" y1="102.5" x2="991" y2="102.5" stroke="#4e1a36" stroke-width="1"/>
<line x1="475" y1="101.6" x2="508" y2="101.6" stroke="#5050d8" stroke-width="0.9"/>
</svg>
<div class="t" style="left:-84.2px;top:42.56px;width:200px;text-align:center;font-size:6.3px;line-height:7.24px;color:#1e2a1e;">20</div>
<div class="t" style="left:-84.2px;top:70.61px;width:200px;text-align:center;font-size:6.3px;line-height:7.24px;color:#1e2a1e;">10</div>
<div class="t" style="left:-84.2px;top:98.46px;width:200px;text-align:center;font-size:6.3px;line-height:7.24px;color:#1e2a1e;">0</div>
<div class="t" style="left:-84.2px;top:126.31px;width:200px;text-align:center;font-size:6.3px;line-height:7.24px;color:#1e2a1e;">-10</div>
<div class="t" style="left:-84.2px;top:154.16px;width:200px;text-align:center;font-size:6.3px;line-height:7.24px;color:#1e2a1e;">-20</div>
<div class="t" style="left:-84.2px;top:182.01px;width:200px;text-align:center;font-size:6.3px;line-height:7.24px;color:#1e2a1e;">-30</div>
<div class="t" style="left:-84.2px;top:209.86px;width:200px;text-align:center;font-size:6.3px;line-height:7.24px;color:#1e2a1e;">-40</div>
<div class="t" style="left:-84.2px;top:237.71px;width:200px;text-align:center;font-size:6.3px;line-height:7.24px;color:#1e2a1e;">-50</div>
<div class="t" style="left:-84.2px;top:265.56px;width:200px;text-align:center;font-size:6.3px;line-height:7.24px;color:#1e2a1e;">-60</div>
<div class="t" style="left:-84.2px;top:293.41px;width:200px;text-align:center;font-size:6.3px;line-height:7.24px;color:#1e2a1e;">-70</div>
<div class="t" style="left:-84.2px;top:321.26px;width:200px;text-align:center;font-size:6.3px;line-height:7.24px;color:#1e2a1e;">-80</div>
<div class="t" style="left:997.5px;top:42.93px;font-size:6.0px;line-height:6.90px;color:#4a8484;">1440</div>
<div class="t" style="left:997.5px;top:77.73px;font-size:6.0px;line-height:6.90px;color:#4a8484;">1080</div>
<div class="t" style="left:997.5px;top:112.55px;font-size:6.0px;line-height:6.90px;color:#4a8484;">720</div>
<div class="t" style="left:997.5px;top:147.35px;font-size:6.0px;line-height:6.90px;color:#4a8484;">360</div>
<div class="t" style="left:997.5px;top:182.16px;font-size:6.0px;line-height:6.90px;color:#4a8484;">0</div>
<div class="t" style="left:997.5px;top:216.97px;font-size:6.0px;line-height:6.90px;color:#4a8484;">-360</div>
<div class="t" style="left:997.5px;top:251.78px;font-size:6.0px;line-height:6.90px;color:#4a8484;">-720</div>
<div class="t" style="left:997.5px;top:286.60px;font-size:6.0px;line-height:6.90px;color:#4a8484;">-1080</div>
<div class="t" style="left:997.5px;top:321.41px;font-size:6.0px;line-height:6.90px;color:#4a8484;">-1440</div>
<div class="t" style="left:-74.5px;top:325.45px;width:200px;text-align:center;font-size:5.6px;line-height:6.44px;color:#3a5a3a;">10</div>
<div class="t" style="left:13.340552734749721px;top:325.45px;width:200px;text-align:center;font-size:5.6px;line-height:6.44px;color:#3a5a3a;">20</div>
<div class="t" style="left:129.4594472652503px;top:325.45px;width:200px;text-align:center;font-size:5.6px;line-height:6.44px;color:#3a5a3a;">50</div>
<div class="t" style="left:217.3px;top:325.45px;width:200px;text-align:center;font-size:5.6px;line-height:6.44px;color:#3a5a3a;">100</div>
<div class="t" style="left:305.14055273474975px;top:325.45px;width:200px;text-align:center;font-size:5.6px;line-height:6.44px;color:#3a5a3a;">200</div>
<div class="t" style="left:421.2594472652503px;top:325.45px;width:200px;text-align:center;font-size:5.6px;line-height:6.44px;color:#3a5a3a;">500</div>
<div class="t" style="left:509.1px;top:325.45px;width:200px;text-align:center;font-size:5.6px;line-height:6.44px;color:#3a5a3a;">1kHz</div>
<div class="t" style="left:596.9405527347498px;top:325.45px;width:200px;text-align:center;font-size:5.6px;line-height:6.44px;color:#3a5a3a;">2kHz</div>
<div class="t" style="left:713.0594472652504px;top:325.45px;width:200px;text-align:center;font-size:5.6px;line-height:6.44px;color:#3a5a3a;">5kHz</div>
<div class="t" style="left:800.9000000000001px;top:325.45px;width:200px;text-align:center;font-size:5.6px;line-height:6.44px;color:#3a5a3a;">10kHz</div>
<div class="t" style="left:888.7405527347497px;top:325.45px;width:200px;text-align:center;font-size:5.6px;line-height:6.44px;color:#3a5a3a;">20kHz</div>
<div style="left:5px;top:332px;width:37px;height:11.5px;background:#f4f4e6"></div>
<div style="left:5.8px;top:332.8px;width:25.9px;height:9.9px;background:#e3da8a"></div>
<div style="left:31.700000000000003px;top:332.8px;width:9.5px;height:9.9px;background:#ededed"></div>
<svg width="8" height="6" style="left:32.45px;top:335.15px"><path d="M2.2 2 H5.8 L4 3.9 Z" fill="#101010"/></svg>
<div class="t" style="left:7.2px;top:333.99px;font-size:6.5px;line-height:7.47px;color:#101010;letter-spacing:-0.35px;word-spacing:1px">10Hz</div>
<div style="left:983px;top:332px;width:38px;height:11.5px;background:#f4f4e6"></div>
<div style="left:983.8px;top:332.8px;width:26.9px;height:9.9px;background:#e3da8a"></div>
<div style="left:1010.7px;top:332.8px;width:9.5px;height:9.9px;background:#ededed"></div>
<svg width="8" height="6" style="left:1011.45px;top:335.15px"><path d="M2.2 2 H5.8 L4 3.9 Z" fill="#101010"/></svg>
<div class="t" style="left:985.2px;top:333.99px;font-size:6.5px;line-height:7.47px;color:#101010;letter-spacing:-0.35px;word-spacing:1px">20kHz</div>
<div style="left:4.5px;top:343.8px;width:160.7px;height:146.0px;border:1px solid #8a9062"></div>
<div style="left:164.8px;top:343.8px;width:161.8px;height:146.0px;border:1px solid #8a9062"></div>
<div style="left:326.8px;top:343.8px;width:162.39999999999998px;height:146.0px;border:1px solid #8a9062"></div>
<div class="t" style="left:9px;top:347.26px;font-size:8.6px;line-height:9.89px;color:#f02a12;">Low</div>
<div class="t" style="left:49.8px;top:348.96px;font-size:7.0px;line-height:8.05px;color:#141410;">Freq</div>
<div class="t" style="left:95px;top:349.26px;font-size:7.0px;line-height:8.05px;color:#141410;">Type</div>
<div style="left:36.9px;top:360.3px;width:39.1px;height:11.699999999999989px;background:#2d2e23"></div>
<div style="left:66.8px;top:360.8px;width:8.700000000000003px;height:10.199999999999989px;background:#e4e4e4"></div>
<div style="left:67.8px;top:365.65px;width:6.700000000000003px;height:0.6px;background:#c8c8c8"></div>
<svg width="8" height="12" style="left:67.4px;top:360.1px"><path d="M2.3 4.6 L4 2.9 L5.7 4.6 Z M2.3 7.4 L4 9.1 L5.7 7.4 Z" fill="#404040"/></svg>
<div class="t" style="left:-48.150000000000006px;top:362.01px;width:200px;text-align:center;font-size:7.0px;line-height:8.05px;color:#eeeedd;">150</div>
<div style="left:83.9px;top:360.3px;width:61.900000000000006px;height:12.099999999999966px;background:#e6e6e6;border:1px solid #b8b8b8"></div>
<div class="t" style="left:86.4px;top:363.20px;font-size:7.2px;line-height:8.28px;color:#303030;">Bessel&nbsp; 3x2</div>
<svg width="8" height="6" style="left:134.8px;top:364.4px"><path d="M1.4 1.4 L4 3.8 L6.6 1.4" fill="none" stroke="#303030" stroke-width="0.7"/></svg>
<div style="left:8.3px;top:377.4px;width:25.7px;height:11.200000000000045px;background:#2d2e23"></div>
<div style="left:25.7px;top:377.9px;width:7.800000000000001px;height:9.700000000000045px;background:#e4e4e4"></div>
<div style="left:26.7px;top:382.5px;width:5.800000000000001px;height:0.6px;background:#c8c8c8"></div>
<svg width="8" height="12" style="left:25.9px;top:377.0px"><path d="M2.3 4.6 L4 2.9 L5.7 4.6 Z M2.3 7.4 L4 9.1 L5.7 7.4 Z" fill="#404040"/></svg>
<div class="t" style="left:-83.0px;top:378.86px;width:200px;text-align:center;font-size:7.0px;line-height:8.05px;color:#eeeedd;">332</div>
<div class="t" style="left:43.5px;top:379.66px;font-size:7.0px;line-height:8.05px;color:#141410;letter-spacing:-0.15px">Delai T1= 3,4583 ms</div>
<div class="t" style="left:36.5px;top:391.66px;font-size:7.0px;line-height:8.05px;color:#141410;">Gain</div>
<div class="t" style="left:86.7px;top:391.66px;font-size:7.0px;line-height:8.05px;color:#141410;">Inv</div>
<div class="t" style="left:106.3px;top:391.66px;font-size:7.0px;line-height:8.05px;color:#141410;">Délai</div>
<div style="left:36.9px;top:401.6px;width:39.1px;height:10.899999999999977px;background:#2d2e23"></div>
<div style="left:67.3px;top:402.1px;width:8.200000000000003px;height:9.399999999999977px;background:#e4e4e4"></div>
<div style="left:68.3px;top:406.55px;width:6.200000000000003px;height:0.6px;background:#c8c8c8"></div>
<svg width="8" height="12" style="left:67.7px;top:401.1px"><path d="M2.3 4.6 L4 2.9 L5.7 4.6 Z M2.3 7.4 L4 9.1 L5.7 7.4 Z" fill="#404040"/></svg>
<div class="t" style="left:-47.900000000000006px;top:402.91px;width:200px;text-align:center;font-size:7.0px;line-height:8.05px;color:#eeeedd;">0,00</div>
<div style="left:87.2px;top:402.4px;width:7px;height:7px;background:#ffffff;border:1px solid #505050;border-right-color:#8a8a8a;border-bottom-color:#666"></div>
<div style="left:106.8px;top:401.6px;width:25.60000000000001px;height:10.899999999999977px;background:#2d2e23"></div>
<div style="left:123.8px;top:402.1px;width:8.100000000000009px;height:9.399999999999977px;background:#e4e4e4"></div>
<div style="left:124.8px;top:406.55px;width:6.1000000000000085px;height:0.6px;background:#c8c8c8"></div>
<svg width="8" height="12" style="left:124.1px;top:401.1px"><path d="M2.3 4.6 L4 2.9 L5.7 4.6 Z M2.3 7.4 L4 9.1 L5.7 7.4 Z" fill="#404040"/></svg>
<div class="t" style="left:15.299999999999997px;top:402.91px;width:200px;text-align:center;font-size:7.0px;line-height:8.05px;color:#e8d8a0;">0</div>
<div class="t" style="left:133.7px;top:403.26px;font-size:7.0px;line-height:8.05px;color:#141410;">ms</div>
<div class="t" style="left:8px;top:419.86px;font-size:7.0px;line-height:8.05px;color:#141410;">Frequence</div>
<div class="t" style="left:55.6px;top:419.86px;font-size:7.0px;line-height:8.05px;color:#141410;">Q</div>
<div class="t" style="left:78px;top:419.86px;font-size:7.0px;line-height:8.05px;color:#141410;">Boost</div>
<div class="t" style="left:118.3px;top:419.86px;font-size:7.0px;line-height:8.05px;color:#141410;">Type</div>
<div style="left:45.7px;top:427.9px;width:28.200000000000003px;height:10.400000000000034px;background:#e2e2e2;border:1px solid #c8c8c8"></div>
<div class="t" style="left:-40.199999999999996px;top:429.85px;width:200px;text-align:center;font-size:7.2px;line-height:8.28px;color:#000000;">Param</div>
<div style="left:106.3px;top:427.4px;width:44.89999999999999px;height:11.200000000000045px;background:#cccccc;border:1px solid #c8c8c8"></div>
<div class="t" style="left:107.89999999999999px;top:429.96px;font-size:7.0px;line-height:8.05px;color:#8c8c8c;">Link Transf</div>
<svg width="8" height="6" style="left:140.2px;top:431.0px"><path d="M1.4 1.4 L4 3.8 L6.6 1.4" fill="none" stroke="#b4b4b4" stroke-width="0.7"/></svg>
<div style="left:153.2px;top:429.0px;width:7px;height:7px;background:#ffffff;border:1px solid #202020;border-right-color:#8a8a8a;border-bottom-color:#666"></div>
<svg width="7" height="7" style="left:153.2px;top:429.0px"><path d="M1.6 2.6 L2.9 4.9 L6.0 1.0" fill="none" stroke="#383838" stroke-width="1"/></svg>
<div style="left:7.3px;top:443px;width:33.7px;height:11.399999999999977px;background:#2d2e23"></div>
<div style="left:32.4px;top:443.5px;width:8.100000000000001px;height:9.899999999999977px;background:#e8e8e8"></div>
<div style="left:33.4px;top:448.2px;width:6.100000000000001px;height:0.6px;background:#c8c8c8"></div>
<svg width="8" height="12" style="left:32.7px;top:442.7px"><path d="M2.3 4.6 L4 2.9 L5.7 4.6 Z M2.3 7.4 L4 9.1 L5.7 7.4 Z" fill="#909090"/></svg>
<div class="t" style="left:-80.15px;top:444.56px;width:200px;text-align:center;font-size:7.0px;line-height:8.05px;color:#8a8a80;">20</div>
<div style="left:43.2px;top:443px;width:33.7px;height:11.399999999999977px;background:#2d2e23"></div>
<div style="left:68.1px;top:443.5px;width:8.300000000000011px;height:9.899999999999977px;background:#e8e8e8"></div>
<div style="left:69.1px;top:448.2px;width:6.300000000000011px;height:0.6px;background:#c8c8c8"></div>
<svg width="8" height="12" style="left:68.5px;top:442.7px"><path d="M2.3 4.6 L4 2.9 L5.7 4.6 Z M2.3 7.4 L4 9.1 L5.7 7.4 Z" fill="#909090"/></svg>
<div class="t" style="left:-44.35px;top:444.56px;width:200px;text-align:center;font-size:7.0px;line-height:8.05px;color:#8a8a80;">0.600</div>
<div style="left:106.3px;top:442.5px;width:45.2px;height:12.100000000000023px;background:#cccccc;border:1px solid #c8c8c8"></div>
<div class="t" style="left:107.89999999999999px;top:445.51px;font-size:7.0px;line-height:8.05px;color:#8c8c8c;">High Pass</div>
<svg width="8" height="6" style="left:140.5px;top:446.6px"><path d="M1.4 1.4 L4 3.8 L6.6 1.4" fill="none" stroke="#b4b4b4" stroke-width="0.7"/></svg>
<div style="left:153.2px;top:444.8px;width:7px;height:7px;background:#ffffff;border:1px solid #202020;border-right-color:#8a8a8a;border-bottom-color:#666"></div>
<svg width="7" height="7" style="left:153.2px;top:444.8px"><path d="M1.6 2.6 L2.9 4.9 L6.0 1.0" fill="none" stroke="#383838" stroke-width="1"/></svg>
<div class="t" style="left:170.4px;top:349.26px;font-size:8.6px;line-height:9.89px;color:#2830e0;">Mid</div>
<div class="t" style="left:210.7px;top:349.26px;font-size:7.0px;line-height:8.05px;color:#141410;">Freq</div>
<div class="t" style="left:262.2px;top:349.26px;font-size:7.0px;line-height:8.05px;color:#141410;">Type</div>
<div style="left:168.6px;top:360.8px;width:25.80000000000001px;height:11.199999999999989px;background:#2d2e23"></div>
<div style="left:185.7px;top:361.3px;width:8.200000000000017px;height:9.699999999999989px;background:#e4e4e4"></div>
<div style="left:186.7px;top:365.9px;width:6.200000000000017px;height:0.6px;background:#c8c8c8"></div>
<svg width="8" height="12" style="left:186.1px;top:360.4px"><path d="M2.3 4.6 L4 2.9 L5.7 4.6 Z M2.3 7.4 L4 9.1 L5.7 7.4 Z" fill="#404040"/></svg>
<div class="t" style="left:77.14999999999998px;top:362.26px;width:200px;text-align:center;font-size:7.0px;line-height:8.05px;color:#eeeedd;">12</div>
<div class="t" style="left:199.9px;top:362.86px;font-size:7.0px;line-height:8.05px;color:#141410;letter-spacing:-0.15px">delai T2= 0.1250 ms</div>
<div style="left:199.9px;top:377.9px;width:38.69999999999999px;height:11.100000000000023px;background:#2d2e23"></div>
<div style="left:229.8px;top:378.4px;width:8.299999999999983px;height:9.600000000000023px;background:#e4e4e4"></div>
<div style="left:230.8px;top:382.95px;width:6.299999999999983px;height:0.6px;background:#c8c8c8"></div>
<svg width="8" height="12" style="left:230.2px;top:377.4px"><path d="M2.3 4.6 L4 2.9 L5.7 4.6 Z M2.3 7.4 L4 9.1 L5.7 7.4 Z" fill="#404040"/></svg>
<div class="t" style="left:114.85000000000002px;top:379.31px;width:200px;text-align:center;font-size:7.0px;line-height:8.05px;color:#eeeedd;">4000</div>
<div style="left:248px;top:376.9px;width:61.80000000000001px;height:12.400000000000034px;background:#e6e6e6;border:1px solid #b8b8b8"></div>
<div class="t" style="left:250.5px;top:379.95px;font-size:7.2px;line-height:8.28px;color:#303030;">Bessel&nbsp; 3x2</div>
<svg width="8" height="6" style="left:298.8px;top:381.1px"><path d="M1.4 1.4 L4 3.8 L6.6 1.4" fill="none" stroke="#303030" stroke-width="0.7"/></svg>
<div class="t" style="left:199.9px;top:391.66px;font-size:7.0px;line-height:8.05px;color:#141410;">Gain</div>
<div class="t" style="left:252.7px;top:391.66px;font-size:7.0px;line-height:8.05px;color:#141410;">Inv</div>
<div class="t" style="left:270.5px;top:391.66px;font-size:7.0px;line-height:8.05px;color:#141410;">Délai</div>
<div style="left:199.9px;top:401.6px;width:39.29999999999998px;height:11.099999999999966px;background:#2d2e23"></div>
<div style="left:230.6px;top:402.1px;width:8.099999999999994px;height:9.599999999999966px;background:#e4e4e4"></div>
<div style="left:231.6px;top:406.65px;width:6.099999999999994px;height:0.6px;background:#c8c8c8"></div>
<svg width="8" height="12" style="left:230.9px;top:401.1px"><path d="M2.3 4.6 L4 2.9 L5.7 4.6 Z M2.3 7.4 L4 9.1 L5.7 7.4 Z" fill="#404040"/></svg>
<div class="t" style="left:115.25px;top:403.01px;width:200px;text-align:center;font-size:7.0px;line-height:8.05px;color:#eeeedd;">0,00</div>
<div style="left:252.5px;top:402.4px;width:7px;height:7px;background:#ffffff;border:1px solid #505050;border-right-color:#8a8a8a;border-bottom-color:#666"></div>
<div style="left:270.8px;top:401.6px;width:25.69999999999999px;height:11.099999999999966px;background:#2d2e23"></div>
<div style="left:287.9px;top:402.1px;width:8.100000000000023px;height:9.599999999999966px;background:#e4e4e4"></div>
<div style="left:288.9px;top:406.65px;width:6.100000000000023px;height:0.6px;background:#c8c8c8"></div>
<svg width="8" height="12" style="left:288.2px;top:401.1px"><path d="M2.3 4.6 L4 2.9 L5.7 4.6 Z M2.3 7.4 L4 9.1 L5.7 7.4 Z" fill="#404040"/></svg>
<div class="t" style="left:179.35000000000002px;top:403.01px;width:200px;text-align:center;font-size:7.0px;line-height:8.05px;color:#e8d8a0;">0</div>
<div class="t" style="left:297.9px;top:402.46px;font-size:7.0px;line-height:8.05px;color:#141410;">ms</div>
<div class="t" style="left:170px;top:419.86px;font-size:7.0px;line-height:8.05px;color:#141410;">Frequence</div>
<div class="t" style="left:217px;top:419.86px;font-size:7.0px;line-height:8.05px;color:#141410;">Q</div>
<div class="t" style="left:240.9px;top:419.86px;font-size:7.0px;line-height:8.05px;color:#141410;">Boost</div>
<div class="t" style="left:281px;top:419.86px;font-size:7.0px;line-height:8.05px;color:#141410;">Type</div>
<div style="left:170px;top:427.9px;width:33.5px;height:11.600000000000023px;background:#2d2e23"></div>
<div style="left:194.9px;top:428.4px;width:8.099999999999994px;height:10.100000000000023px;background:#e8e8e8"></div>
<div style="left:195.9px;top:433.2px;width:6.099999999999994px;height:0.6px;background:#c8c8c8"></div>
<svg width="8" height="12" style="left:195.2px;top:427.7px"><path d="M2.3 4.6 L4 2.9 L5.7 4.6 Z M2.3 7.4 L4 9.1 L5.7 7.4 Z" fill="#909090"/></svg>
<div class="t" style="left:82.44999999999999px;top:429.56px;width:200px;text-align:center;font-size:7.0px;line-height:8.05px;color:#8a8a80;">1000</div>
<div style="left:205.2px;top:427.9px;width:33.70000000000002px;height:11.600000000000023px;background:#2d2e23"></div>
<div style="left:229.8px;top:428.4px;width:8.599999999999994px;height:10.100000000000023px;background:#e8e8e8"></div>
<div style="left:230.8px;top:433.2px;width:6.599999999999994px;height:0.6px;background:#c8c8c8"></div>
<svg width="8" height="12" style="left:230.4px;top:427.7px"><path d="M2.3 4.6 L4 2.9 L5.7 4.6 Z M2.3 7.4 L4 9.1 L5.7 7.4 Z" fill="#909090"/></svg>
<div class="t" style="left:117.5px;top:429.56px;width:200px;text-align:center;font-size:7.0px;line-height:8.05px;color:#8a8a80;">5,000</div>
<div style="left:241px;top:427.9px;width:26.600000000000023px;height:11.600000000000023px;background:#2d2e23"></div>
<div style="left:258.8px;top:428.4px;width:8.300000000000011px;height:10.100000000000023px;background:#e8e8e8"></div>
<div style="left:259.8px;top:433.2px;width:6.300000000000011px;height:0.6px;background:#c8c8c8"></div>
<svg width="8" height="12" style="left:259.2px;top:427.7px"><path d="M2.3 4.6 L4 2.9 L5.7 4.6 Z M2.3 7.4 L4 9.1 L5.7 7.4 Z" fill="#909090"/></svg>
<div class="t" style="left:149.9px;top:429.56px;width:200px;text-align:center;font-size:7.0px;line-height:8.05px;color:#8a8a80;">0,0</div>
<div style="left:269.3px;top:427.4px;width:45.19999999999999px;height:12.100000000000023px;background:#cccccc;border:1px solid #c8c8c8"></div>
<div class="t" style="left:270.90000000000003px;top:430.64px;font-size:6.6px;line-height:7.59px;color:#8c8c8c;">PEQ</div>
<svg width="8" height="6" style="left:303.5px;top:431.4px"><path d="M1.4 1.4 L4 3.8 L6.6 1.4" fill="none" stroke="#b4b4b4" stroke-width="0.7"/></svg>
<div style="left:316.1px;top:429.9px;width:7px;height:7px;background:#ffffff;border:1px solid #202020;border-right-color:#8a8a8a;border-bottom-color:#666"></div>
<svg width="7" height="7" style="left:316.1px;top:429.9px"><path d="M1.6 2.6 L2.9 4.9 L6.0 1.0" fill="none" stroke="#383838" stroke-width="1"/></svg>
<div style="left:170px;top:442.5px;width:33.5px;height:11.5px;background:#2d2e23"></div>
<div style="left:194.9px;top:443.0px;width:8.099999999999994px;height:10.0px;background:#e8e8e8"></div>
<div style="left:195.9px;top:447.75px;width:6.099999999999994px;height:0.6px;background:#c8c8c8"></div>
<svg width="8" height="12" style="left:195.2px;top:442.2px"><path d="M2.3 4.6 L4 2.9 L5.7 4.6 Z M2.3 7.4 L4 9.1 L5.7 7.4 Z" fill="#909090"/></svg>
<div class="t" style="left:82.44999999999999px;top:444.11px;width:200px;text-align:center;font-size:7.0px;line-height:8.05px;color:#8a8a80;">1000</div>
<div style="left:205.2px;top:442.5px;width:33.70000000000002px;height:11.5px;background:#2d2e23"></div>
<div style="left:229.8px;top:443.0px;width:8.599999999999994px;height:10.0px;background:#e8e8e8"></div>
<div style="left:230.8px;top:447.75px;width:6.599999999999994px;height:0.6px;background:#c8c8c8"></div>
<svg width="8" height="12" style="left:230.4px;top:442.2px"><path d="M2.3 4.6 L4 2.9 L5.7 4.6 Z M2.3 7.4 L4 9.1 L5.7 7.4 Z" fill="#909090"/></svg>
<div class="t" style="left:117.5px;top:444.11px;width:200px;text-align:center;font-size:7.0px;line-height:8.05px;color:#8a8a80;">5,000</div>
<div style="left:241px;top:442.5px;width:26.600000000000023px;height:11.5px;background:#2d2e23"></div>
<div style="left:258.8px;top:443.0px;width:8.300000000000011px;height:10.0px;background:#e8e8e8"></div>
<div style="left:259.8px;top:447.75px;width:6.300000000000011px;height:0.6px;background:#c8c8c8"></div>
<svg width="8" height="12" style="left:259.2px;top:442.2px"><path d="M2.3 4.6 L4 2.9 L5.7 4.6 Z M2.3 7.4 L4 9.1 L5.7 7.4 Z" fill="#909090"/></svg>
<div class="t" style="left:149.9px;top:444.11px;width:200px;text-align:center;font-size:7.0px;line-height:8.05px;color:#8a8a80;">0,0</div>
<div style="left:269.3px;top:442.0px;width:45.19999999999999px;height:12.0px;background:#cccccc;border:1px solid #c8c8c8"></div>
<div class="t" style="left:270.90000000000003px;top:445.19px;font-size:6.6px;line-height:7.59px;color:#8c8c8c;">PEQ</div>
<svg width="8" height="6" style="left:303.5px;top:446.0px"><path d="M1.4 1.4 L4 3.8 L6.6 1.4" fill="none" stroke="#b4b4b4" stroke-width="0.7"/></svg>
<div style="left:316.1px;top:444.5px;width:7px;height:7px;background:#ffffff;border:1px solid #202020;border-right-color:#8a8a8a;border-bottom-color:#666"></div>
<svg width="7" height="7" style="left:316.1px;top:444.5px"><path d="M1.6 2.6 L2.9 4.9 L6.0 1.0" fill="none" stroke="#383838" stroke-width="1"/></svg>
<div class="t" style="left:330.4px;top:347.76px;font-size:8.6px;line-height:9.89px;color:#1a9a1a;">High</div>
<div class="t" style="left:361.8px;top:391.96px;font-size:7.0px;line-height:8.05px;color:#141410;">Gain</div>
<div class="t" style="left:414.9px;top:391.96px;font-size:7.0px;line-height:8.05px;color:#141410;">Inv</div>
<div class="t" style="left:432.5px;top:391.96px;font-size:7.0px;line-height:8.05px;color:#141410;">Délai</div>
<div style="left:361.3px;top:401.7px;width:39.19999999999999px;height:10.900000000000034px;background:#2d2e23"></div>
<div style="left:392px;top:402.2px;width:8.0px;height:9.400000000000034px;background:#e4e4e4"></div>
<div style="left:393px;top:406.65px;width:6.0px;height:0.6px;background:#c8c8c8"></div>
<svg width="8" height="12" style="left:392.2px;top:401.1px"><path d="M2.3 4.6 L4 2.9 L5.7 4.6 Z M2.3 7.4 L4 9.1 L5.7 7.4 Z" fill="#404040"/></svg>
<div class="t" style="left:276.65px;top:403.01px;width:200px;text-align:center;font-size:7.0px;line-height:8.05px;color:#eeeedd;">0,00</div>
<div style="left:415.3px;top:403px;width:7px;height:7px;background:#ffffff;border:1px solid #505050;border-right-color:#8a8a8a;border-bottom-color:#666"></div>
<div style="left:432.8px;top:401.7px;width:26.0px;height:10.900000000000034px;background:#2d2e23"></div>
<div style="left:450px;top:402.2px;width:8.300000000000011px;height:9.400000000000034px;background:#e4e4e4"></div>
<div style="left:451px;top:406.65px;width:6.300000000000011px;height:0.6px;background:#c8c8c8"></div>
<svg width="8" height="12" style="left:450.4px;top:401.1px"><path d="M2.3 4.6 L4 2.9 L5.7 4.6 Z M2.3 7.4 L4 9.1 L5.7 7.4 Z" fill="#404040"/></svg>
<div class="t" style="left:341.4px;top:403.01px;width:200px;text-align:center;font-size:7.0px;line-height:8.05px;color:#e8d8a0;">0</div>
<div class="t" style="left:460.6px;top:403.06px;font-size:7.0px;line-height:8.05px;color:#141410;">ms</div>
<div class="t" style="left:330.9px;top:419.76px;font-size:7.0px;line-height:8.05px;color:#141410;">Frequence</div>
<div class="t" style="left:377px;top:419.76px;font-size:7.0px;line-height:8.05px;color:#141410;">Q</div>
<div class="t" style="left:402.2px;top:419.76px;font-size:7.0px;line-height:8.05px;color:#141410;">Boost</div>
<div class="t" style="left:440px;top:419.76px;font-size:7.0px;line-height:8.05px;color:#141410;">Type</div>
<div style="left:330.9px;top:427.2px;width:33.900000000000034px;height:11.400000000000034px;background:#2d2e23"></div>
<div style="left:356px;top:427.7px;width:8.300000000000011px;height:9.900000000000034px;background:#e8e8e8"></div>
<div style="left:357px;top:432.4px;width:6.300000000000011px;height:0.6px;background:#c8c8c8"></div>
<svg width="8" height="12" style="left:356.4px;top:426.9px"><path d="M2.3 4.6 L4 2.9 L5.7 4.6 Z M2.3 7.4 L4 9.1 L5.7 7.4 Z" fill="#909090"/></svg>
<div class="t" style="left:243.45px;top:428.76px;width:200px;text-align:center;font-size:7.0px;line-height:8.05px;color:#8a8a80;">1000</div>
<div style="left:367.1px;top:427.2px;width:33.39999999999998px;height:11.400000000000034px;background:#2d2e23"></div>
<div style="left:391.7px;top:427.7px;width:8.300000000000011px;height:9.900000000000034px;background:#e8e8e8"></div>
<div style="left:392.7px;top:432.4px;width:6.300000000000011px;height:0.6px;background:#c8c8c8"></div>
<svg width="8" height="12" style="left:392.1px;top:426.9px"><path d="M2.3 4.6 L4 2.9 L5.7 4.6 Z M2.3 7.4 L4 9.1 L5.7 7.4 Z" fill="#909090"/></svg>
<div class="t" style="left:279.4px;top:428.76px;width:200px;text-align:center;font-size:7.0px;line-height:8.05px;color:#8a8a80;">5,000</div>
<div style="left:402.6px;top:427.2px;width:26.69999999999999px;height:11.400000000000034px;background:#2d2e23"></div>
<div style="left:421px;top:427.7px;width:7.800000000000011px;height:9.900000000000034px;background:#e8e8e8"></div>
<div style="left:422px;top:432.4px;width:5.800000000000011px;height:0.6px;background:#c8c8c8"></div>
<svg width="8" height="12" style="left:421.1px;top:426.9px"><path d="M2.3 4.6 L4 2.9 L5.7 4.6 Z M2.3 7.4 L4 9.1 L5.7 7.4 Z" fill="#909090"/></svg>
<div class="t" style="left:311.8px;top:428.76px;width:200px;text-align:center;font-size:7.0px;line-height:8.05px;color:#8a8a80;">0,0</div>
<div style="left:431.6px;top:426.7px;width:44.299999999999955px;height:11.900000000000034px;background:#cccccc;border:1px solid #c8c8c8"></div>
<div class="t" style="left:433.20000000000005px;top:429.84px;font-size:6.6px;line-height:7.59px;color:#8c8c8c;">PEQ</div>
<svg width="8" height="6" style="left:464.9px;top:430.6px"><path d="M1.4 1.4 L4 3.8 L6.6 1.4" fill="none" stroke="#b4b4b4" stroke-width="0.7"/></svg>
<div style="left:478.2px;top:429.59999999999997px;width:7px;height:7px;background:#ffffff;border:1px solid #202020;border-right-color:#8a8a8a;border-bottom-color:#666"></div>
<svg width="7" height="7" style="left:478.2px;top:429.59999999999997px"><path d="M1.6 2.6 L2.9 4.9 L6.0 1.0" fill="none" stroke="#383838" stroke-width="1"/></svg>
<div style="left:330.9px;top:442.5px;width:33.900000000000034px;height:11.5px;background:#2d2e23"></div>
<div style="left:356px;top:443.0px;width:8.300000000000011px;height:10.0px;background:#e8e8e8"></div>
<div style="left:357px;top:447.75px;width:6.300000000000011px;height:0.6px;background:#c8c8c8"></div>
<svg width="8" height="12" style="left:356.4px;top:442.2px"><path d="M2.3 4.6 L4 2.9 L5.7 4.6 Z M2.3 7.4 L4 9.1 L5.7 7.4 Z" fill="#909090"/></svg>
<div class="t" style="left:243.45px;top:444.11px;width:200px;text-align:center;font-size:7.0px;line-height:8.05px;color:#8a8a80;">1000</div>
<div style="left:367.1px;top:442.5px;width:33.39999999999998px;height:11.5px;background:#2d2e23"></div>
<div style="left:391.7px;top:443.0px;width:8.300000000000011px;height:10.0px;background:#e8e8e8"></div>
<div style="left:392.7px;top:447.75px;width:6.300000000000011px;height:0.6px;background:#c8c8c8"></div>
<svg width="8" height="12" style="left:392.1px;top:442.2px"><path d="M2.3 4.6 L4 2.9 L5.7 4.6 Z M2.3 7.4 L4 9.1 L5.7 7.4 Z" fill="#909090"/></svg>
<div class="t" style="left:279.4px;top:444.11px;width:200px;text-align:center;font-size:7.0px;line-height:8.05px;color:#8a8a80;">5,000</div>
<div style="left:402.6px;top:442.5px;width:26.69999999999999px;height:11.5px;background:#2d2e23"></div>
<div style="left:421px;top:443.0px;width:7.800000000000011px;height:10.0px;background:#e8e8e8"></div>
<div style="left:422px;top:447.75px;width:5.800000000000011px;height:0.6px;background:#c8c8c8"></div>
<svg width="8" height="12" style="left:421.1px;top:442.2px"><path d="M2.3 4.6 L4 2.9 L5.7 4.6 Z M2.3 7.4 L4 9.1 L5.7 7.4 Z" fill="#909090"/></svg>
<div class="t" style="left:311.8px;top:444.11px;width:200px;text-align:center;font-size:7.0px;line-height:8.05px;color:#8a8a80;">0,0</div>
<div style="left:431.6px;top:442.0px;width:44.299999999999955px;height:12.0px;background:#cccccc;border:1px solid #c8c8c8"></div>
<div class="t" style="left:433.20000000000005px;top:445.19px;font-size:6.6px;line-height:7.59px;color:#8c8c8c;">PEQ</div>
<svg width="8" height="6" style="left:464.9px;top:446.0px"><path d="M1.4 1.4 L4 3.8 L6.6 1.4" fill="none" stroke="#b4b4b4" stroke-width="0.7"/></svg>
<div style="left:478.2px;top:444.9px;width:7px;height:7px;background:#ffffff;border:1px solid #202020;border-right-color:#8a8a8a;border-bottom-color:#666"></div>
<svg width="7" height="7" style="left:478.2px;top:444.9px"><path d="M1.6 2.6 L2.9 4.9 L6.0 1.0" fill="none" stroke="#383838" stroke-width="1"/></svg>
<div style="left:3.7px;top:490.8px;width:487.2px;height:20px;background:#2d2e23"></div>
<div style="left:10.8px;top:490.8px;width:52.8px;height:15.9px;background:#cbd887"></div>
<div class="t" style="left:-63.0px;top:495.24px;width:200px;text-align:center;font-size:7.4px;line-height:8.51px;color:#101010;">Canal L</div>
<div style="left:67.3px;top:490.8px;width:53.4px;height:16.5px;border:1px solid #c4c098;border-top:none"></div>
<div class="t" style="left:-6px;top:495.24px;width:200px;text-align:center;font-size:7.4px;line-height:8.51px;color:#f0f0e0;">Canal R</div>
<div style="left:205.7px;top:494px;width:54.80000000000001px;height:13.800000000000011px;background:#e1e1e1;border:1px solid #adadad"></div>
<div class="t" style="left:133.1px;top:496.94px;width:200px;text-align:center;font-size:7.4px;line-height:8.51px;color:#101010;">Copy L-&gt;R</div>
<div style="left:268.8px;top:494px;width:54.80000000000001px;height:13.800000000000011px;background:#e1e1e1;border:1px solid #adadad"></div>
<div class="t" style="left:196.20000000000005px;top:496.94px;width:200px;text-align:center;font-size:7.4px;line-height:8.51px;color:#101010;">Copy R-&gt;L</div>
<div style="left:401.4px;top:494px;width:80.80000000000001px;height:13.899999999999977px;background:#e1e1e1;border:1px solid #adadad"></div>
<div class="t" style="left:341.79999999999995px;top:496.88px;width:200px;text-align:center;font-size:7.6px;line-height:8.74px;color:#101010;">Transfert To DSP</div>
<div style="left:835px;top:360px;width:189px;height:148.5px;background:#808080;border-left:1px solid #707070"></div>
<div style="left:835px;top:360px;width:189px;height:13px;background:#ffffff"></div>
<svg width="10" height="9" style="left:837px;top:362.5px"><rect x="0.6" y="0.6" width="7.6" height="7" fill="#f2f2f2" stroke="#c8c8c8" stroke-width="0.5"/><rect x="0.8" y="2.8" width="2.6" height="2.8" fill="#c02828"/><rect x="3.2" y="0.8" width="4.6" height="4" fill="#e8c030"/><rect x="3.6" y="4.8" width="3.8" height="2.8" fill="#4a80d8"/></svg>
<div class="t" style="left:847.6px;top:363.28px;font-size:6.25px;line-height:7.19px;color:#9c9c9c;">DS Courbes -- Canal L</div>
<div style="left:961px;top:366px;width:6px;height:0.8px;background:#707070"></div>
<div style="left:985.5px;top:363px;width:5.5px;height:5.5px;border:0.8px solid #e4e4e4"></div>
<svg width="8" height="8" style="left:1009.5px;top:363px"><path d="M1 1 L6.2 6.2 M6.2 1 L1 6.2" stroke="#707070" stroke-width="0.7"/></svg>
<svg width="8" height="8" style="left:890.6px;top:377.8px"><rect x="1" y="1" width="5.5" height="5.5" fill="#c8c8c8" stroke="#e040a8" stroke-width="1"/><path d="M1.8 3.6 L3.2 5.4 L5.8 1.6" fill="none" stroke="#e040a8" stroke-width="1"/></svg>
<div class="t" style="left:899.5px;top:378.43px;font-size:7.6px;line-height:8.74px;color:#e83ca8;">Filtres Global</div>
<div style="left:835.5px;top:387px;width:146px;height:61.5px;border:1px solid #5a5a5a;border-radius:0 2px 0 0;border-bottom:1.5px solid #202020"></div>
<div class="t" style="left:839.8px;top:390.21px;font-size:7.8px;line-height:8.97px;color:#101010;font-weight:bold">Low</div>
<div class="t" style="left:891.4px;top:390.21px;font-size:7.8px;line-height:8.97px;color:#101010;font-weight:bold">Mid</div>
<div class="t" style="left:942.6px;top:390.21px;font-size:7.8px;line-height:8.97px;color:#101010;font-weight:bold">High</div>
<div class="t" style="left:989.8px;top:390.21px;font-size:7.8px;line-height:8.97px;color:#101010;font-weight:bold">Total</div>
<svg width="8" height="8" style="left:839.0px;top:401.7px"><rect x="1" y="1" width="5.5" height="5.5" fill="#c8c8c8" stroke="#e07878" stroke-width="1"/><path d="M1.8 3.6 L3.2 5.4 L5.8 1.6" fill="none" stroke="#e07878" stroke-width="1"/></svg>
<div class="t" style="left:848.8px;top:402.43px;font-size:7.6px;line-height:8.74px;color:#e07878;">Filtres</div>
<svg width="8" height="8" style="left:839.0px;top:413.3px"><rect x="1" y="1" width="5.5" height="5.5" fill="#c8c8c8" stroke="#e06830" stroke-width="1"/></svg>
<div class="t" style="left:848.8px;top:414.03px;font-size:7.6px;line-height:8.74px;color:#e06830;">Simu</div>
<svg width="8" height="8" style="left:839.0px;top:424.5px"><rect x="1" y="1" width="5.5" height="5.5" fill="#c8c8c8" stroke="#801818" stroke-width="1"/></svg>
<div class="t" style="left:848.8px;top:425.23px;font-size:7.6px;line-height:8.74px;color:#801818;">Mesure</div>
<div style="left:838.1px;top:435.7px;width:34.39999999999998px;height:9.0px;background:#e8e8e8;border:1px solid #d0d0d0"></div>
<div class="t" style="left:755.3px;top:437.46px;width:200px;text-align:center;font-size:6.3px;line-height:7.24px;color:#b02020;">mesure</div>
<svg width="8" height="8" style="left:890.4px;top:401.7px"><rect x="1" y="1" width="5.5" height="5.5" fill="#c8c8c8" stroke="#2020d8" stroke-width="1"/><path d="M1.8 3.6 L3.2 5.4 L5.8 1.6" fill="none" stroke="#2020d8" stroke-width="1"/></svg>
<div class="t" style="left:900.1999999999999px;top:402.43px;font-size:7.6px;line-height:8.74px;color:#2020d8;">Filtres</div>
<svg width="8" height="8" style="left:890.4px;top:413.3px"><rect x="1" y="1" width="5.5" height="5.5" fill="#c8c8c8" stroke="#40b8e0" stroke-width="1"/></svg>
<div class="t" style="left:900.1999999999999px;top:414.03px;font-size:7.6px;line-height:8.74px;color:#40b8e0;">Simu</div>
<svg width="8" height="8" style="left:890.4px;top:424.5px"><rect x="1" y="1" width="5.5" height="5.5" fill="#c8c8c8" stroke="#202080" stroke-width="1"/></svg>
<div class="t" style="left:900.1999999999999px;top:425.23px;font-size:7.6px;line-height:8.74px;color:#202080;">Mesure</div>
<div style="left:891.5px;top:435.7px;width:34.39999999999998px;height:9.0px;background:#e8e8e8;border:1px solid #d0d0d0"></div>
<div class="t" style="left:808.7px;top:437.46px;width:200px;text-align:center;font-size:6.3px;line-height:7.24px;color:#202070;">mesure</div>
<svg width="8" height="8" style="left:941.5px;top:401.7px"><rect x="1" y="1" width="5.5" height="5.5" fill="#c8c8c8" stroke="#208020" stroke-width="1"/><path d="M1.8 3.6 L3.2 5.4 L5.8 1.6" fill="none" stroke="#208020" stroke-width="1"/></svg>
<div class="t" style="left:951.3px;top:402.43px;font-size:7.6px;line-height:8.74px;color:#208020;">Filtres</div>
<svg width="8" height="8" style="left:941.5px;top:413.3px"><rect x="1" y="1" width="5.5" height="5.5" fill="#c8c8c8" stroke="#80e040" stroke-width="1"/></svg>
<div class="t" style="left:951.3px;top:414.03px;font-size:7.6px;line-height:8.74px;color:#80e040;">Simu</div>
<svg width="8" height="8" style="left:941.5px;top:424.5px"><rect x="1" y="1" width="5.5" height="5.5" fill="#c8c8c8" stroke="#206020" stroke-width="1"/></svg>
<div class="t" style="left:951.3px;top:425.23px;font-size:7.6px;line-height:8.74px;color:#206020;">Mesure</div>
<div style="left:942.6px;top:435.7px;width:34.39999999999998px;height:9.0px;background:#e8e8e8;border:1px solid #d0d0d0"></div>
<div class="t" style="left:859.8px;top:437.46px;width:200px;text-align:center;font-size:6.3px;line-height:7.24px;color:#207020;">mesure</div>
<svg width="8" height="8" style="left:987.3px;top:401.7px"><rect x="1" y="1" width="5.5" height="5.5" fill="#c8c8c8" stroke="#9030c0" stroke-width="1"/><path d="M1.8 3.6 L3.2 5.4 L5.8 1.6" fill="none" stroke="#9030c0" stroke-width="1"/></svg>
<div class="t" style="left:996.9px;top:402.43px;font-size:7.6px;line-height:8.74px;color:#8a2ac8;">Filtres</div>
<svg width="8" height="8" style="left:987.3px;top:413.3px"><rect x="1" y="1" width="5.5" height="5.5" fill="#c8c8c8" stroke="#e040e0" stroke-width="1"/></svg>
<div class="t" style="left:996.9px;top:414.03px;font-size:7.6px;line-height:8.74px;color:#d838d8;">Simu</div>
<div style="left:835.5px;top:450.5px;width:146px;height:57px;border:1px solid #5a5a5a;border-bottom:1px solid #404040"></div>
<svg width="8" height="8" style="left:839.0px;top:454.7px"><rect x="1" y="1" width="5.5" height="5.5" fill="#c8c8c8" stroke="#b06040" stroke-width="1"/></svg>
<div class="t" style="left:848.8px;top:455.43px;font-size:7.6px;line-height:8.74px;color:#b06040;">A</div>
<div style="left:838.4px;top:465.6px;width:33.60000000000002px;height:8.899999999999977px;background:#e8e8e8;border:1px solid #d0d0d0"></div>
<div class="t" style="left:755.2px;top:467.31px;width:200px;text-align:center;font-size:6.3px;line-height:7.24px;color:#a03020;">mesure</div>
<svg width="8" height="8" style="left:890.8px;top:454.7px"><rect x="1" y="1" width="5.5" height="5.5" fill="#c8c8c8" stroke="#90c8e8" stroke-width="1"/></svg>
<div class="t" style="left:900.5999999999999px;top:455.43px;font-size:7.6px;line-height:8.74px;color:#90c8e8;">B</div>
<div style="left:892.1999999999999px;top:465.6px;width:33.60000000000002px;height:8.899999999999977px;background:#e8e8e8;border:1px solid #d0d0d0"></div>
<div class="t" style="left:809.0px;top:467.31px;width:200px;text-align:center;font-size:6.3px;line-height:7.24px;color:#90c8e8;">mesure</div>
<svg width="8" height="8" style="left:941.6px;top:454.7px"><rect x="1" y="1" width="5.5" height="5.5" fill="#c8c8c8" stroke="#40c040" stroke-width="1"/></svg>
<div class="t" style="left:951.4px;top:455.43px;font-size:7.6px;line-height:8.74px;color:#40c040;">C</div>
<div style="left:941.0px;top:465.6px;width:33.60000000000002px;height:8.899999999999977px;background:#e8e8e8;border:1px solid #d0d0d0"></div>
<div class="t" style="left:857.8px;top:467.31px;width:200px;text-align:center;font-size:6.3px;line-height:7.24px;color:#30b030;">mesure</div>
<svg width="8" height="8" style="left:839.0px;top:482.4px"><rect x="1" y="1" width="5.5" height="5.5" fill="#c8c8c8" stroke="#e080c0" stroke-width="1"/></svg>
<div class="t" style="left:848.8px;top:483.13px;font-size:7.6px;line-height:8.74px;color:#e080c0;">D</div>
<div style="left:838.4px;top:493px;width:33.60000000000002px;height:9px;background:#e8e8e8;border:1px solid #d0d0d0"></div>
<div class="t" style="left:755.2px;top:494.76px;width:200px;text-align:center;font-size:6.3px;line-height:7.24px;color:#e060b0;">mesure</div>
<svg width="8" height="8" style="left:890.8px;top:482.4px"><rect x="1" y="1" width="5.5" height="5.5" fill="#c8c8c8" stroke="#a040c0" stroke-width="1"/></svg>
<div class="t" style="left:900.5999999999999px;top:483.13px;font-size:7.6px;line-height:8.74px;color:#a040c0;">E</div>
<div style="left:892.1999999999999px;top:493px;width:33.60000000000002px;height:9px;background:#e8e8e8;border:1px solid #d0d0d0"></div>
<div class="t" style="left:809.0px;top:494.76px;width:200px;text-align:center;font-size:6.3px;line-height:7.24px;color:#8020a0;">mesure</div>
<svg width="8" height="8" style="left:941.6px;top:482.4px"><rect x="1" y="1" width="5.5" height="5.5" fill="#c8c8c8" stroke="#e0e040" stroke-width="1"/></svg>
<div class="t" style="left:951.4px;top:483.13px;font-size:7.6px;line-height:8.74px;color:#e0e040;">F</div>
<div style="left:941.0px;top:493px;width:33.60000000000002px;height:9px;background:#e8e8e8;border:1px solid #d0d0d0"></div>
<div class="t" style="left:857.8px;top:494.76px;width:200px;text-align:center;font-size:6.3px;line-height:7.24px;color:#e8e820;">mesure</div>
<svg width="8" height="8" style="left:987.3px;top:447.0px"><rect x="1" y="1" width="5.5" height="5.5" fill="#c8c8c8" stroke="#60d0d0" stroke-width="1"/></svg>
<div class="t" style="left:996.9px;top:447.63px;font-size:7.6px;line-height:8.74px;color:#60d0c8;">RTA</div>
<svg width="8" height="8" style="left:987.5px;top:466.5px"><rect x="1" y="1" width="5.5" height="5.5" fill="#c8c8c8" stroke="#e0d890" stroke-width="1"/></svg>
<div class="t" style="left:997px;top:467.23px;font-size:7.6px;line-height:8.74px;color:#e0d890;">Calib</div>
<div style="left:989.5px;top:487.5px;width:20.799999999999955px;height:14.300000000000011px;background:#e8e8e8;border:1px solid #e0e0e0"></div>
<div class="t" style="left:899.9px;top:492.52px;width:200px;text-align:center;font-size:5.2px;line-height:5.98px;color:#101010;">Tous Off</div>
<div style="left:835px;top:508.5px;width:189px;height:2px;background:#a8b070"></div>
<div style="left:0px;top:510.5px;width:1024px;height:2.5px;background:#f8f8f0"></div>
<div style="left:0px;top:513px;width:1024px;height:4px;background:#2d2e23"></div>
</body></html>
